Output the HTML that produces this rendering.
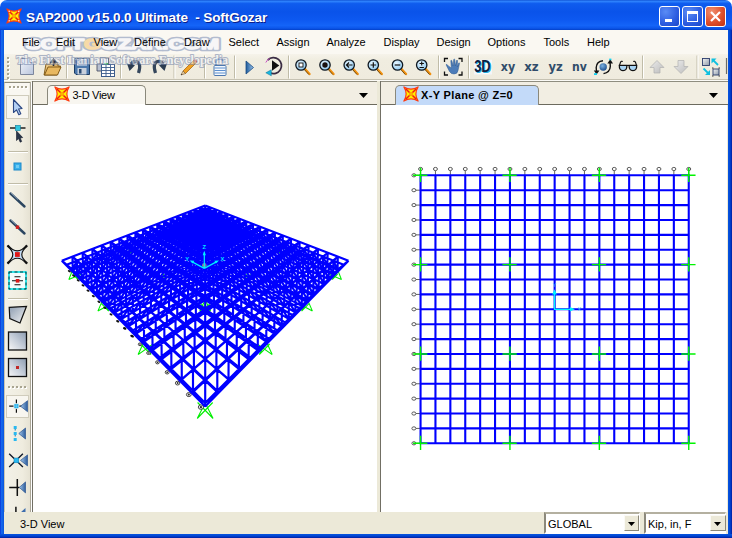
<!DOCTYPE html><html><head><meta charset="utf-8"><title>SAP2000 v15.0.0 Ultimate - SoftGozar</title><style>
html,body{margin:0;padding:0;}
body{width:732px;height:538px;overflow:hidden;background:#fff;position:relative;font-family:"Liberation Sans","DejaVu Sans",sans-serif;font-size:11px;color:#000;}
.abs{position:absolute;}
#title{left:0;top:0;width:732px;height:30px;background:linear-gradient(to bottom,#1458d8 0%,#2c80fc 5%,#0f5cee 12%,#0a53ea 40%,#0d58f0 65%,#1464f8 85%,#0c56ea 94%,#0340c8 100%);border-radius:7px 7px 0 0;}
#ttext{left:26px;top:9.5px;color:#fff;font-weight:bold;font-size:13.6px;letter-spacing:-0.12px;white-space:pre;text-shadow:1px 1px 0 #0a1e8a;}
#menubar{left:4px;top:30px;width:724px;height:24px;background:#faf8f2;}
.mi{position:absolute;top:36px;font-size:11px;color:#000;white-space:pre;}
#tbar{left:4px;top:54px;width:724px;height:25px;background:linear-gradient(to bottom,#f6f3ea 0%,#f0ede0 25%,#efebde 100%);}
#tbline{left:4px;top:79px;width:724px;height:1px;background:#c6c2b2;border-bottom:1px solid #fbfaf6;}
#work{left:4px;top:81px;width:724px;height:432px;background:#ece9d8;}
#ltb{left:4px;top:82px;width:26px;height:430px;background:linear-gradient(to right,#f3f1e8,#efecdf 70%,#e6e2d3);border-top:1px solid #8c8a7c;border-left:1px solid #c8c4b4;box-sizing:border-box}
.tabstrip{position:absolute;top:81px;height:22px;background:#f2eee3;border-top:1px solid #8f8d80;border-bottom:1px solid #6c6a5e;}
.view{position:absolute;top:105px;height:407px;background:#fff;}
#status{left:4px;top:512px;width:724px;height:22px;background:#ece9d8;}
.tab{position:absolute;top:85px;height:19px;border:1px solid #8a887b;border-bottom:none;border-radius:5px 5px 0 0;}
.wm{position:absolute;white-space:pre;pointer-events:none;}
.combo{position:absolute;top:512px;height:18px;background:#fff;border-top:2px solid #b4b0a0;border-left:2px solid #8c897c;border-right:1px solid #fff;border-bottom:2px solid #fff;font-size:11px;}
</style></head><body>
<div id="title" class="abs"></div>
<div id="ttext" class="abs">SAP2000 v15.0.0 Ultimate  - SoftGozar</div>
<svg class="abs" style="left:6px;top:8px" width="16" height="16" viewBox="0 0 18 18"><path d="M1 1Q9 6 17 1Q12 9 17 17Q9 12 1 17Q6 9 1 1Z" fill="#ffee00" stroke="#ff3a10" stroke-width="1.3" stroke-linejoin="round"/><path d="M3 3L15 15M15 3L3 15" stroke="#f01818" stroke-width="1.7"/><rect x="7" y="7" width="4" height="4" fill="#ffb000"/><circle cx="3.6" cy="3.6" r="0.8" fill="#fff"/><circle cx="14.4" cy="3.6" r="0.8" fill="#fff"/><circle cx="3.6" cy="14.4" r="0.8" fill="#fff"/><circle cx="14.4" cy="14.4" r="0.8" fill="#fff"/></svg>
<div class="abs" style="left:659px;top:6px;width:19px;height:19px;border:1px solid #fff;border-radius:3px;background:radial-gradient(circle at 30% 25%,#5a8cf5,#2c5ce0 60%,#1c46c8)"></div>
<div class="abs" style="left:665px;top:19px;width:7px;height:3px;background:#fff"></div>
<div class="abs" style="left:682px;top:6px;width:19px;height:19px;border:1px solid #fff;border-radius:3px;background:radial-gradient(circle at 30% 25%,#5a8cf5,#2c5ce0 60%,#1c46c8)"></div>
<div class="abs" style="left:687px;top:11px;width:9px;height:7px;border:1px solid #fff;border-top:3px solid #fff"></div>
<div class="abs" style="left:705px;top:6px;width:19px;height:19px;border:1px solid #fff;border-radius:3px;background:radial-gradient(circle at 30% 25%,#f09070,#e0502c 55%,#c03010)"></div>
<svg class="abs" style="left:705px;top:6px" width="21" height="21" viewBox="0 0 21 21"><path d="M6 6L15 15M15 6L6 15" stroke="#fff" stroke-width="2.2"/></svg>

<div id="menubar" class="abs"></div>
<div id="tbar" class="abs"></div><div id="tbline" class="abs"></div>
<div id="work" class="abs"></div><div id="ltb" class="abs"></div>
<svg class="abs" style="left:0;top:0" width="732" height="110" viewBox="0 0 732 110" font-family="Liberation Sans,sans-serif"><defs>
<linearGradient id="gpage" x1="0" y1="0" x2="1" y2="1"><stop offset="0" stop-color="#f4f6fb"/><stop offset="1" stop-color="#b8c4dc"/></linearGradient>
<linearGradient id="gfold" x1="0" y1="0" x2="1" y2="1"><stop offset="0" stop-color="#f8dca0"/><stop offset="1" stop-color="#c08830"/></linearGradient>
<linearGradient id="gtri" x1="0" y1="0" x2="1" y2="0"><stop offset="0" stop-color="#1c5a9c"/><stop offset="1" stop-color="#9cc4ea"/></linearGradient>
<linearGradient id="garr" x1="0" y1="0" x2="1" y2="1"><stop offset="0" stop-color="#ececec"/><stop offset="1" stop-color="#bcbcbc"/></linearGradient>
<radialGradient id="glens" cx="0.4" cy="0.35" r="0.7"><stop offset="0" stop-color="#e8f6ff"/><stop offset="1" stop-color="#8cc8f0"/></radialGradient>
<radialGradient id="gsph" cx="0.4" cy="0.35" r="0.7"><stop offset="0" stop-color="#7ab0e0"/><stop offset="1" stop-color="#1c4c8c"/></radialGradient>
<linearGradient id="gsq" x1="0" y1="0" x2="1" y2="1"><stop offset="0" stop-color="#f4f4f4"/><stop offset="1" stop-color="#8c98a8"/></linearGradient>
</defs><rect x="8" y="58" width="2" height="2" fill="#fff"/><rect x="7" y="57" width="2" height="2" fill="#a8a490"/><rect x="8" y="62" width="2" height="2" fill="#fff"/><rect x="7" y="61" width="2" height="2" fill="#a8a490"/><rect x="8" y="66" width="2" height="2" fill="#fff"/><rect x="7" y="65" width="2" height="2" fill="#a8a490"/><rect x="8" y="70" width="2" height="2" fill="#fff"/><rect x="7" y="69" width="2" height="2" fill="#a8a490"/><rect x="8" y="74" width="2" height="2" fill="#fff"/><rect x="7" y="73" width="2" height="2" fill="#a8a490"/><rect x="8" y="78" width="2" height="2" fill="#fff"/><rect x="7" y="77" width="2" height="2" fill="#a8a490"/><path d="M66.5 55.500V78.500" stroke="#c0bca8" stroke-width="1"/><path d="M67.5 55.500V78.500" stroke="#fff" stroke-width="1"/><path d="M120.5 55.500V78.500" stroke="#c0bca8" stroke-width="1"/><path d="M121.5 55.500V78.500" stroke="#fff" stroke-width="1"/><path d="M174.0 55.500V78.500" stroke="#c0bca8" stroke-width="1"/><path d="M175.0 55.500V78.500" stroke="#fff" stroke-width="1"/><path d="M204.5 55.500V78.500" stroke="#c0bca8" stroke-width="1"/><path d="M205.5 55.500V78.500" stroke="#fff" stroke-width="1"/><path d="M234.5 55.500V78.500" stroke="#c0bca8" stroke-width="1"/><path d="M235.5 55.500V78.500" stroke="#fff" stroke-width="1"/><path d="M288.5 55.500V78.500" stroke="#c0bca8" stroke-width="1"/><path d="M289.5 55.500V78.500" stroke="#fff" stroke-width="1"/><path d="M438.5 55.500V78.500" stroke="#c0bca8" stroke-width="1"/><path d="M439.5 55.500V78.500" stroke="#fff" stroke-width="1"/><path d="M468.5 55.500V78.500" stroke="#c0bca8" stroke-width="1"/><path d="M469.5 55.500V78.500" stroke="#fff" stroke-width="1"/><path d="M642.5 55.500V78.500" stroke="#c0bca8" stroke-width="1"/><path d="M643.5 55.500V78.500" stroke="#fff" stroke-width="1"/><path d="M697.0 55.500V78.500" stroke="#c0bca8" stroke-width="1"/><path d="M698.0 55.500V78.500" stroke="#fff" stroke-width="1"/><path d="M20.5 58.5H29.5L33.5 62.5V74.5H20.5Z" fill="url(#gpage)" stroke="#7c869c" stroke-width="1"/><path d="M29.5 58.5V62.5H33.5" fill="#fff" stroke="#7c869c" stroke-width="1"/><path d="M44 75L46 64H50L51 62.5H57L58 64V66H60.5L57 75Z" fill="url(#gfold)" stroke="#7a5410" stroke-width="0.9"/><path d="M44.5 75L48 67H61L57.5 75Z" fill="#e8b860" stroke="#7a5410" stroke-width="0.9"/><path d="M53.5 66V61M50.8 62.5L53.5 59L56.2 62.5Z" stroke="#26282c" stroke-width="1.6" fill="#26282c"/><path d="M74.5 58.5H89.5V74.5H76L74.5 73Z" fill="#4c78ac" stroke="#1c3c64" stroke-width="1"/><rect x="77" y="59" width="10" height="6.5" fill="#e8eef6"/><path d="M78 61H86M78 63H86" stroke="#6c7c90" stroke-width="0.8"/><rect x="77.5" y="68" width="9" height="6.5" fill="#c8d0dc"/><rect x="79" y="69" width="2.5" height="4.5" fill="#2c4c74"/><rect x="100.5" y="58" width="8" height="10" fill="#f4f4f4" stroke="#5c6478" stroke-width="0.9"/><path d="M97 63.5H103V71H97Z" fill="#b8c0d0" stroke="#4c5468" stroke-width="0.9"/><rect x="101.5" y="64.500" width="13" height="12" fill="#fff" stroke="#3c5c8c" stroke-width="1"/><path d="M101.5 67.500H114.500M101.500 70.500H114.500M101.500 73.500H114.500M106 64.500V76.500M110.500 64.500V76.500" stroke="#3c5c8c" stroke-width="0.9"/><rect x="104" y="63" width="4" height="1.500" fill="#30c060"/><path d="M138.500 73Q142 62.500 135.500 61.300Q132 61 131 65" stroke="#34465c" stroke-width="3.200" fill="none"/><path d="M127 63.500L135 65.200L129.500 71Z" fill="#2c3c50"/><path d="M155.500 73Q152 62.500 158.500 61.300Q162 61 163 65" stroke="#34465c" stroke-width="3.200" fill="none"/><path d="M167 63.500L159 65.200L164.500 71Z" fill="#2c3c50"/><path d="M183 71L193.500 60.500L196 63L185.500 73.500Z" fill="#f0a020" stroke="#a05c08" stroke-width="0.7"/><path d="M183 71L185.500 73.500L181 75Z" fill="#e8d0a0" stroke="#705030" stroke-width="0.6"/><path d="M193.500 60.500L195 59L197.500 61.500L196 63Z" fill="#c84030"/><path d="M181 75l1.200 -0.400l-0.800 -0.800z" fill="#202020"/><path d="M216 66V62.500Q216 59 219.500 59Q223 59 223 62V63" stroke="#5c88c0" stroke-width="1.600" fill="none"/><rect x="214" y="65.500" width="12" height="10" rx="1" fill="#f4f8fc" stroke="#4c78b0" stroke-width="1"/><path d="M214.500 68H225.500M214.500 70.500H225.500M214.500 73H225.500" stroke="#5c90d0" stroke-width="1.200"/><path d="M246 61L253.500 67.500L246 74Z" fill="url(#gtri)" stroke="#1c4c84" stroke-width="0.8"/><path d="M267.800 60A8 8 0 1 1 270 72.800" stroke="#3a2c44" stroke-width="1.800" fill="none"/><path d="M265.800 62.500Q267 60 269.500 58.500" stroke="#c040c0" stroke-width="0.900" fill="none"/><path d="M272 60.200L279.300 65.500L272 70.800Z" fill="#101010"/><path d="M265.800 72.800L271.300 69.800V75.800Z" fill="#18b8e0" stroke="#0c6c90" stroke-width="0.500"/><path d="M305.0 69L309.5 74" stroke="#f09010" stroke-width="2.400" stroke-linecap="round"/><path d="M304.3 69.500L308.8 74.500" stroke="#40300c" stroke-width="0.700"/><circle cx="301.0" cy="65" r="5.200" fill="url(#glens)" stroke="#101820" stroke-width="1.300"/><rect x="299" y="63" width="4" height="4" fill="#fff" stroke="#101010" stroke-width="0.900"/><path d="M329.0 69L333.5 74" stroke="#f09010" stroke-width="2.400" stroke-linecap="round"/><path d="M328.3 69.500L332.8 74.500" stroke="#40300c" stroke-width="0.700"/><circle cx="325.0" cy="65" r="5.200" fill="url(#glens)" stroke="#101820" stroke-width="1.300"/><circle cx="325" cy="65" r="2.700" fill="#181010"/><path d="M353.2 69L357.7 74" stroke="#f09010" stroke-width="2.400" stroke-linecap="round"/><path d="M352.5 69.500L357.0 74.500" stroke="#40300c" stroke-width="0.700"/><circle cx="349.2" cy="65" r="5.200" fill="url(#glens)" stroke="#101820" stroke-width="1.300"/><path d="M346.500 65H352.500M349 62.500L346.500 65L349 67.500" stroke="#101010" stroke-width="1.200" fill="none"/><path d="M377.3 69L381.8 74" stroke="#f09010" stroke-width="2.400" stroke-linecap="round"/><path d="M376.6 69.500L381.1 74.500" stroke="#40300c" stroke-width="0.700"/><circle cx="373.3" cy="65" r="5.200" fill="url(#glens)" stroke="#101820" stroke-width="1.300"/><path d="M370.500 65H376.100M373.300 62.200V67.800" stroke="#101010" stroke-width="1.200"/><path d="M401.5 69L406.0 74" stroke="#f09010" stroke-width="2.400" stroke-linecap="round"/><path d="M400.8 69.500L405.3 74.500" stroke="#40300c" stroke-width="0.700"/><circle cx="397.5" cy="65" r="5.200" fill="url(#glens)" stroke="#101820" stroke-width="1.300"/><path d="M394.700 65H400.300" stroke="#101010" stroke-width="1.200"/><path d="M425.7 69L430.2 74" stroke="#f09010" stroke-width="2.400" stroke-linecap="round"/><path d="M425.0 69.500L429.5 74.500" stroke="#40300c" stroke-width="0.700"/><circle cx="421.7" cy="65" r="5.200" fill="url(#glens)" stroke="#101820" stroke-width="1.300"/><path d="M419.500 63.500H423.900M421.700 61.500V65.500M419.500 67.500H423.900" stroke="#101010" stroke-width="1.100"/><path d="M444.500 62V58.500H448M458.500 58.500H462V62M462 71.500V75H458.500M448 75H444.500V71.500" stroke="#101010" stroke-width="1.300" fill="none"/><path d="M449 66.500L447 64.500Q446 64 446.300 65.200L449.500 71.500Q451 74 454 74Q457.500 74 458 70.500L459.500 63.500Q459.500 62.500 458.700 63L457.300 67L457.500 60.500Q457 59.500 456.500 60.500L455.300 66L454.800 59.500Q454.200 58.500 453.700 59.500L453.200 66L451.800 60.500Q451.200 59.700 450.800 60.700L451.300 68Z" fill="#4c7cb8" stroke="#2c5890" stroke-width="0.500"/><rect x="474" y="59.700" width="18" height="14.800" fill="#f2f5fa" opacity="0.95"/><g font-family="Liberation Sans,sans-serif" font-size="16.500" font-weight="bold"><text x="475.200" y="73" fill="#ffffff" stroke="#ffffff" stroke-width="1.500" textLength="16.500" lengthAdjust="spacingAndGlyphs">3D</text><text x="475" y="72.800" fill="#28b0e0" textLength="16.500" lengthAdjust="spacingAndGlyphs">3D</text><text x="474.200" y="72.200" fill="#0c2040" textLength="16.500" lengthAdjust="spacingAndGlyphs">3D</text></g><text x="500.8" y="70.800" font-family="DejaVu Sans,sans-serif" font-size="13" font-weight="bold" fill="#304c6a" textLength="14.4" lengthAdjust="spacingAndGlyphs">xy</text><text x="524.3" y="70.800" font-family="DejaVu Sans,sans-serif" font-size="13" font-weight="bold" fill="#304c6a" textLength="14.4" lengthAdjust="spacingAndGlyphs">xz</text><text x="548.6" y="70.800" font-family="DejaVu Sans,sans-serif" font-size="13" font-weight="bold" fill="#304c6a" textLength="14.2" lengthAdjust="spacingAndGlyphs">yz</text><text x="572.0" y="70.800" font-family="DejaVu Sans,sans-serif" font-size="13" font-weight="bold" fill="#304c6a" textLength="14.8" lengthAdjust="spacingAndGlyphs">nv</text><circle cx="603.200" cy="67" r="3.700" fill="url(#gsph)"/><path d="M603 60.800Q596.500 61.500 596.200 67.500Q596.200 70 596.800 71.500" stroke="#101010" stroke-width="1.400" fill="none"/><path d="M603.500 73.600Q610 72.500 610.300 66.500Q610.300 64 610 62.800" stroke="#101010" stroke-width="1.400" fill="none"/><path d="M610.200 59.200L613 63.600H607.400Z" fill="#101010"/><path d="M596.600 74.600L593.800 70.400H599.400Z" fill="#101010"/><rect x="609.200" y="58.600" width="2.200" height="1.600" fill="#10d0f0"/><rect x="594" y="73.200" width="3" height="1.800" fill="#10d0f0"/><path d="M619.300 66L620.500 62.300Q621.200 60.800 622.800 61.600M636.700 66L635.500 62.300Q634.800 60.800 633.200 61.600" stroke="#101010" stroke-width="1.100" fill="none"/><path d="M619.300 65.300H626.800Q627.300 70.600 623 70.600Q619 70.600 619.300 65.300ZM629.200 65.300H636.700Q637 70.600 633 70.600Q628.700 70.600 629.200 65.300Z" fill="#a8d4f4" stroke="#101010" stroke-width="1.200"/><path d="M626.500 65.800Q628 64.800 629.500 65.800" stroke="#101010" stroke-width="1.200" fill="none"/><path d="M657 60.500L664 67.500H660V73H654V67.500H650Z" fill="url(#garr)" stroke="#b0b0b0" stroke-width="0.700"/><path d="M681 73.500L688 66.500H684V60.500H678V66.500H674Z" fill="url(#garr)" stroke="#b0b0b0" stroke-width="0.700"/><rect x="702.500" y="58.500" width="7" height="7" fill="url(#gsq)" stroke="#2c3c6c" stroke-width="0.900"/><rect x="713" y="69" width="6" height="6" fill="url(#gsq)" stroke="#2c3c6c" stroke-width="0.900"/><path d="M712 68H713.500M718.500 68H720M712 76H713.500M718.500 76H720" stroke="#101010" stroke-width="0.800"/><path d="M718 65L713 60" stroke="#10c0e0" stroke-width="1.800"/><path d="M711.500 58.500H716.500L711.500 63.500Z" fill="#10c0e0"/><path d="M703.500 68.500L708.500 73.500" stroke="#10c0e0" stroke-width="1.800"/><path d="M710 75H705L710 70Z" fill="#10c0e0"/><path d="M726.500 58V74" stroke="#6c6c64" stroke-width="1.200"/></svg>
<svg class="abs" style="left:0;top:81px" width="34" height="432" viewBox="0 81 34 432"><defs>
<linearGradient id="lsq" x1="0" y1="1" x2="1" y2="0"><stop offset="0" stop-color="#f8f8f8"/><stop offset="0.5" stop-color="#c4ccd8"/><stop offset="1" stop-color="#8c9cb0"/></linearGradient>
<linearGradient id="lsq2" x1="0" y1="0" x2="1" y2="1"><stop offset="0" stop-color="#8c9cb0"/><stop offset="1" stop-color="#f4f4f4"/></linearGradient>
<linearGradient id="ltri" x1="0" y1="0" x2="1" y2="0"><stop offset="0" stop-color="#a4c8ec"/><stop offset="1" stop-color="#2c5c9c"/></linearGradient>
</defs><rect x="5.500" y="83" width="24" height="12" fill="#f9f7f1"/><rect x="10" y="87" width="2" height="2" fill="#fff"/><rect x="9" y="86" width="2" height="2" fill="#a8a490"/><rect x="14" y="87" width="2" height="2" fill="#fff"/><rect x="13" y="86" width="2" height="2" fill="#a8a490"/><rect x="18" y="87" width="2" height="2" fill="#fff"/><rect x="17" y="86" width="2" height="2" fill="#a8a490"/><rect x="22" y="87" width="2" height="2" fill="#fff"/><rect x="21" y="86" width="2" height="2" fill="#a8a490"/><rect x="26" y="87" width="2" height="2" fill="#fff"/><rect x="25" y="86" width="2" height="2" fill="#a8a490"/><rect x="6.5" y="95.500" width="22" height="23" fill="#f8f6f0" stroke="#d0ccbc" stroke-width="1"/><path d="M13.500 99.500V112.500L16.500 109.800L18.800 114.800L20.800 113.800L18.600 109L22 108.500Z" fill="#b4d0f4" stroke="#2c4884" stroke-width="1.100" stroke-linejoin="round"/><path d="M10 128H25.500" stroke="#101010" stroke-width="1.400"/><rect x="15.300" y="125.300" width="5" height="5.300" fill="#30c8e0" stroke="#1c7c98" stroke-width="0.600"/><path d="M16.500 131V140.500L18.600 138.600L20.200 142.200L21.700 141.500L20.200 138L22.700 137.600Z" fill="#283448" stroke="#101828" stroke-width="0.600"/><path d="M8 151.5H28" stroke="#c0bca8" stroke-width="1"/><path d="M8 152.5H28" stroke="#fff" stroke-width="1"/><path d="M8 183.5H28" stroke="#c0bca8" stroke-width="1"/><path d="M8 184.5H28" stroke="#fff" stroke-width="1"/><path d="M8 298.5H28" stroke="#c0bca8" stroke-width="1"/><path d="M8 299.5H28" stroke="#fff" stroke-width="1"/><rect x="14" y="163" width="7" height="7" fill="#38b0ec" stroke="#1c88c8" stroke-width="1"/><rect x="16" y="165" width="3" height="3" fill="#70ccf4"/><path d="M10.500 193.500L24.500 206.500" stroke="#2c4660" stroke-width="2.400" stroke-linecap="round"/><path d="M10.800 192.800L18 199.500" stroke="#8ca4bc" stroke-width="0.900"/><path d="M10.500 220.500L24.500 233.500" stroke="#2c4660" stroke-width="2.400" stroke-linecap="round"/><path d="M10.800 219.800L16 224.600" stroke="#8ca4bc" stroke-width="0.900"/><rect x="15.800" y="225.500" width="3.400" height="3.400" fill="#d02020"/><path d="M8.300 245.300Q12.500 250.800 17.300 250.800Q22.100 250.800 26.300 245.300L27.200 246.200Q21.800 250.500 21.800 254.500Q21.800 258.500 27.200 262.800L26.300 263.700Q22.100 258.200 17.300 258.200Q12.500 258.200 8.300 263.700L7.400 262.800Q12.800 258.500 12.800 254.500Q12.800 250.500 7.400 246.200Z" fill="#c4dcf4" stroke="#101010" stroke-width="1.150" stroke-linejoin="round"/><rect x="15" y="252.100" width="4.800" height="4.800" fill="#e01818"/><rect x="9" y="272" width="17" height="17" fill="#f4fcfc" stroke="#00e0e8" stroke-width="1.600"/><rect x="9" y="272" width="17" height="17" fill="none" stroke="#101010" stroke-width="0.800" stroke-dasharray="3 2.500"/><path d="M12 280.800H23M14.500 276.800H20.500M14.500 284.800H20.500" stroke="#101010" stroke-width="1.100"/><rect x="15.800" y="279" width="3.600" height="3.600" fill="#e01818"/><path d="M9.200 307.300L26.500 306.300L20 323L9.800 318.600Z" fill="url(#lsq2)" stroke="#101010" stroke-width="1.200"/><rect x="8.500" y="332" width="18" height="18" fill="url(#lsq)" stroke="#101010" stroke-width="1.300"/><rect x="8.500" y="358.500" width="18" height="18" fill="url(#lsq)" stroke="#101010" stroke-width="1.300"/><rect x="16" y="366" width="3" height="3" fill="#c02828"/><rect x="9" y="387" width="2" height="2" fill="#fff"/><rect x="8" y="386" width="2" height="2" fill="#a8a490"/><rect x="13" y="387" width="2" height="2" fill="#fff"/><rect x="12" y="386" width="2" height="2" fill="#a8a490"/><rect x="17" y="387" width="2" height="2" fill="#fff"/><rect x="16" y="386" width="2" height="2" fill="#a8a490"/><rect x="21" y="387" width="2" height="2" fill="#fff"/><rect x="20" y="386" width="2" height="2" fill="#a8a490"/><rect x="25" y="387" width="2" height="2" fill="#fff"/><rect x="24" y="386" width="2" height="2" fill="#a8a490"/><rect x="6.500" y="395.500" width="22" height="22" fill="#f8f6f0" stroke="#d0ccbc" stroke-width="1"/><path d="M9.200 406.200H22.500M16.400 399.500V412.700" stroke="#101010" stroke-width="1.200"/><rect x="13.900" y="403.700" width="5" height="5" fill="#20b0ec" stroke="#f4f2ea" stroke-width="0.800"/><path d="M16.400 404V408.400M14.200 406.200H18.600" stroke="#7cd4f8" stroke-width="0.600"/><path d="M20.5 406.2L27.5 400.7V411.7Z" fill="url(#ltri)" stroke="#2c5490" stroke-width="0.700"/><path d="M15.200 426V440.500" stroke="#1878b0" stroke-width="1" stroke-dasharray="1.500 1.500"/><rect x="13.700" y="426" width="3" height="3" fill="#28b8f0"/><rect x="13.700" y="432" width="3" height="3" fill="#28b8f0"/><rect x="13.700" y="438" width="3" height="3" fill="#28b8f0"/><path d="M18.8 433.5L25.5 428.0V439.0Z" fill="url(#ltri)" stroke="#2c5490" stroke-width="0.700"/><path d="M9.200 453.700L22.900 467M22.900 453.700L9.200 467" stroke="#101828" stroke-width="1.400"/><rect x="14" y="458" width="4.800" height="4.800" fill="#28b8f0" stroke="#1080b8" stroke-width="0.500"/><path d="M20.5 460.4L27.5 454.9V465.9Z" fill="url(#ltri)" stroke="#2c5490" stroke-width="0.700"/><path d="M9.200 487.400H19.500M17.300 479V496" stroke="#101010" stroke-width="1.500"/><path d="M19.3 487.4L25.5 481.9V492.9Z" fill="url(#ltri)" stroke="#2c5490" stroke-width="0.700"/><path d="M15.900 506.700V513" stroke="#101010" stroke-width="1.500"/><path d="M20 513L25.500 508V513Z" fill="#3c6cac"/></svg>
<div class="abs" style="left:30px;top:82px;width:1px;height:430px;background:#aca899"></div><div class="abs" style="left:31px;top:82px;width:1px;height:430px;background:#fff"></div><div class="abs" style="left:32px;top:81px;width:1px;height:431px;background:#716f64"></div>
<div class="tabstrip" style="left:33px;width:344px"></div>
<div class="tabstrip" style="left:381px;width:347px"></div>
<div class="view" style="left:33px;width:344px"></div>
<div class="view" style="left:381px;width:346px"></div><div class="abs" style="left:380px;top:81px;width:1px;height:431px;background:#716f64"></div>
<div class="tab" style="left:47px;width:97px;background:#f8f6f0"></div>
<div class="abs" style="left:48px;top:104px;width:97px;height:1px;background:#fff"></div>
<svg class="abs" style="left:54px;top:86px" width="16" height="16" viewBox="0 0 18 18"><path d="M1 1Q9 6 17 1Q12 9 17 17Q9 12 1 17Q6 9 1 1Z" fill="#ffee00" stroke="#ff3a10" stroke-width="1.3" stroke-linejoin="round"/><path d="M3 3L15 15M15 3L3 15" stroke="#f01818" stroke-width="1.7"/><rect x="7" y="7" width="4" height="4" fill="#ffb000"/></svg>
<div class="abs" style="left:72.5px;top:89px;font-size:11px;letter-spacing:-0.3px;white-space:pre">3-D View</div>
<div class="tab" style="left:395px;width:142px;background:#c3daf9"></div>
<svg class="abs" style="left:402.5px;top:86px" width="16" height="16" viewBox="0 0 18 18"><path d="M1 1Q9 6 17 1Q12 9 17 17Q9 12 1 17Q6 9 1 1Z" fill="#ffee00" stroke="#ff3a10" stroke-width="1.3" stroke-linejoin="round"/><path d="M3 3L15 15M15 3L3 15" stroke="#f01818" stroke-width="1.7"/><rect x="7" y="7" width="4" height="4" fill="#ffb000"/></svg>
<div class="abs" style="left:421px;top:89px;font-size:11px;font-weight:bold;letter-spacing:0.35px;white-space:pre">X-Y Plane @ Z=0</div>
<svg class="abs" style="left:359px;top:93px" width="9" height="5"><path d="M0 0H9L4.5 5Z" fill="#000"/></svg>
<svg class="abs" style="left:709px;top:93px" width="9" height="5"><path d="M0 0H9L4.5 5Z" fill="#000"/></svg>

<svg class="abs" style="left:0;top:0" width="732" height="538" viewBox="0 0 732 538"><path d="M72.7 269.8L68.8 279.6M72.7 269.8L78.1 279.6M68.8 279.6L81.7 274.0M78.1 279.6L72.7 274.0M127.6 247.0L123.9 255.8M127.6 247.0L132.1 255.8M123.9 255.8L133.9 251.4M132.1 255.8L125.9 251.4M170.6 229.2L167.1 237.1M170.6 229.2L174.4 237.1M167.1 237.1L175.1 233.6M174.4 237.1L167.9 233.6M205.2 214.8L201.9 222.0M205.2 214.8L208.4 222.0M201.9 222.0L208.4 219.2M208.4 222.0L201.9 219.2M102.7 299.9L97.9 311.1M102.7 299.9L108.7 311.1M97.9 311.1L111.9 303.6M108.7 311.1L101.4 303.6M161.0 269.8L156.6 279.6M161.0 269.8L165.9 279.6M156.6 279.6L167.0 274.0M165.9 279.6L158.0 274.0M205.2 247.0L201.1 255.8M205.2 247.0L209.2 255.8M201.1 255.8L209.1 251.4M209.2 255.8L201.2 251.4M239.7 229.2L235.9 237.1M239.7 229.2L243.2 237.1M235.9 237.1L242.4 233.6M243.2 237.1L235.2 233.6M144.1 341.5L138.1 354.6M144.1 341.5L151.0 354.6M138.1 354.6L153.1 344.0M151.0 354.6L140.7 344.0M205.2 299.9L199.7 311.1M205.2 299.9L210.6 311.1M199.7 311.1L210.4 303.6M210.6 311.1L199.9 303.6M249.3 269.8L244.4 279.6M249.3 269.8L253.7 279.6M244.4 279.6L252.3 274.0M253.7 279.6L243.3 274.0M282.7 247.0L278.2 255.8M282.7 247.0L286.4 255.8M278.2 255.8L284.4 251.4M286.4 255.8L276.4 251.4M205.2 402.9L197.2 418.5M205.2 402.9L213.1 418.5M197.2 418.5L212.7 402.5M213.1 418.5L197.6 402.5M266.2 341.5L259.3 354.6M266.2 341.5L272.2 354.6M259.3 354.6L269.6 344.0M272.2 354.6L257.2 344.0M307.6 299.9L301.6 311.1M307.6 299.9L312.4 311.1M301.6 311.1L308.9 303.6M312.4 311.1L298.4 303.6M337.6 269.8L332.2 279.6M337.6 269.8L341.5 279.6M332.2 279.6L337.6 274.0M341.5 279.6L328.6 274.0" stroke="#00ee00" stroke-width="1.1" fill="none"/><ellipse cx="69.3" cy="271.2" rx="1.6" ry="1.0" fill="#101010" transform="rotate(25 69.3 271.2)"/><ellipse cx="73.6" cy="275.7" rx="1.6" ry="1.0" fill="#101010" transform="rotate(25 73.6 275.7)"/><ellipse cx="78.2" cy="280.4" rx="1.6" ry="1.0" fill="#101010" transform="rotate(25 78.2 280.4)"/><ellipse cx="83.0" cy="285.4" rx="1.6" ry="1.0" fill="#101010" transform="rotate(25 83.0 285.4)"/><ellipse cx="88.0" cy="290.6" rx="1.6" ry="1.0" fill="#101010" transform="rotate(25 88.0 290.6)"/><ellipse cx="93.3" cy="296.1" rx="1.6" ry="1.0" fill="#101010" transform="rotate(25 93.3 296.1)"/><ellipse cx="98.9" cy="301.8" rx="1.6" ry="1.0" fill="#101010" transform="rotate(25 98.9 301.8)"/><ellipse cx="104.8" cy="307.9" rx="1.6" ry="1.0" fill="#101010" transform="rotate(25 104.8 307.9)"/><ellipse cx="111.0" cy="314.4" rx="1.6" ry="1.0" fill="#101010" transform="rotate(25 111.0 314.4)"/><ellipse cx="117.7" cy="321.2" rx="1.7" ry="1.1" fill="#101010" transform="rotate(25 117.7 321.2)"/><ellipse cx="124.7" cy="328.4" rx="1.8" ry="1.2" fill="#101010" transform="rotate(25 124.7 328.4)"/><ellipse cx="132.1" cy="336.1" rx="2.0" ry="1.2" fill="#101010" transform="rotate(25 132.1 336.1)"/><ellipse cx="140.0" cy="344.3" rx="1.7" ry="1.4" fill="#fff" stroke="#303030" stroke-width="0.9"/><circle cx="140.0" cy="344.3" r="0.7" fill="#303030"/><ellipse cx="148.5" cy="353.0" rx="1.8" ry="1.5" fill="#fff" stroke="#303030" stroke-width="0.9"/><circle cx="148.5" cy="353.0" r="0.8" fill="#303030"/><ellipse cx="157.5" cy="362.3" rx="1.9" ry="1.6" fill="#fff" stroke="#303030" stroke-width="0.9"/><circle cx="157.5" cy="362.3" r="0.9" fill="#303030"/><ellipse cx="167.2" cy="372.3" rx="2.0" ry="1.7" fill="#fff" stroke="#303030" stroke-width="0.9"/><circle cx="167.2" cy="372.3" r="0.9" fill="#303030"/><ellipse cx="177.6" cy="383.1" rx="2.2" ry="1.9" fill="#fff" stroke="#303030" stroke-width="0.9"/><circle cx="177.6" cy="383.1" r="1.0" fill="#303030"/><ellipse cx="188.8" cy="394.6" rx="2.4" ry="2.0" fill="#fff" stroke="#303030" stroke-width="0.9"/><circle cx="188.8" cy="394.6" r="1.1" fill="#303030"/><ellipse cx="200.9" cy="407.1" rx="2.6" ry="2.2" fill="#fff" stroke="#303030" stroke-width="0.9"/><circle cx="200.9" cy="407.1" r="1.2" fill="#303030"/><path d="M72.7 269.8L205.2 214.8M72.7 269.8L205.2 402.9M77.1 274.2L210.4 217.0M82.9 265.6L217.3 390.7M81.7 278.9L215.9 219.3M92.6 261.5L228.5 379.5M86.6 283.7L221.5 221.6M101.9 257.7L238.9 369.0M91.7 288.8L227.4 224.1M110.9 254.0L248.6 359.2M97.0 294.2L233.4 226.6M119.4 250.4L257.7 350.1M102.7 299.9L239.7 229.2M127.6 247.0L266.2 341.5M108.6 305.9L246.2 231.9M135.5 243.7L274.2 333.5M114.9 312.2L253.0 234.7M143.0 240.6L281.7 326.0M121.6 318.9L260.0 237.6M150.3 237.6L288.7 318.9M128.6 326.0L267.3 240.6M157.3 234.7L295.4 312.2M136.1 333.5L274.8 243.7M164.1 231.9L301.7 305.9M144.1 341.5L282.7 247.0M170.6 229.2L307.6 299.9M152.6 350.1L290.9 250.4M176.9 226.6L313.3 294.2M161.7 359.2L299.4 254.0M182.9 224.1L318.6 288.8M171.4 369.0L308.4 257.7M188.8 221.6L323.7 283.7M181.8 379.5L317.7 261.5M194.4 219.3L328.6 278.9M193.0 390.7L327.4 265.6M199.9 217.0L333.2 274.2M205.2 402.9L337.6 269.8M205.2 214.8L337.6 269.8M61.8 260.7L205.2 205.5M61.8 260.7L205.2 406.4M66.0 265.0L210.4 207.5M72.5 256.6L218.3 393.0M70.5 269.6L215.9 209.6M82.7 252.7L230.4 380.7M75.2 274.3L221.6 211.8M92.4 248.9L241.6 369.4M80.1 279.4L227.4 214.0M101.8 245.3L252.0 358.8M85.3 284.6L233.5 216.4M110.7 241.9L261.6 349.0M90.8 290.2L239.8 218.8M119.3 238.6L270.6 339.9M96.6 296.1L246.3 221.3M127.5 235.4L278.9 331.4M102.8 302.3L253.0 223.9M135.4 232.4L286.8 323.5M109.3 309.0L260.1 226.6M143.0 229.4L294.1 316.0M116.2 316.0L267.3 229.4M150.2 226.6L301.0 309.0M123.5 323.5L274.9 232.4M157.3 223.9L307.5 302.3M131.4 331.4L282.8 235.4M164.0 221.3L313.7 296.1M139.7 339.9L291.0 238.6M170.5 218.8L319.5 290.2M148.7 349.0L299.6 241.9M176.8 216.4L325.0 284.6M158.3 358.8L308.5 245.3M182.9 214.0L330.2 279.4M168.7 369.4L317.9 248.9M188.7 211.8L335.1 274.3M179.9 380.7L327.6 252.7M194.4 209.6L339.8 269.6M192.0 393.0L337.8 256.6M199.9 207.5L344.3 265.0M205.2 406.4L348.5 260.7M205.2 205.5L348.5 260.7M61.8 260.7L72.7 269.8M72.5 256.6L72.7 269.8M72.5 256.6L82.9 265.6M82.7 252.7L82.9 265.6M82.7 252.7L92.6 261.5M92.4 248.9L92.6 261.5M92.4 248.9L101.9 257.7M101.8 245.3L101.9 257.7M101.8 245.3L110.9 254.0M110.7 241.9L110.9 254.0M110.7 241.9L119.4 250.4M119.3 238.6L119.4 250.4M119.3 238.6L127.6 247.0M127.5 235.4L127.6 247.0M127.5 235.4L135.5 243.7M135.4 232.4L135.5 243.7M135.4 232.4L143.0 240.6M143.0 229.4L143.0 240.6M143.0 229.4L150.3 237.6M150.2 226.6L150.3 237.6M150.2 226.6L157.3 234.7M157.3 223.9L157.3 234.7M157.3 223.9L164.1 231.9M164.0 221.3L164.1 231.9M164.0 221.3L170.6 229.2M170.5 218.8L170.6 229.2M170.5 218.8L176.9 226.6M176.8 216.4L176.9 226.6M176.8 216.4L182.9 224.1M182.9 214.0L182.9 224.1M182.9 214.0L188.8 221.6M188.7 211.8L188.8 221.6M188.7 211.8L194.4 219.3M194.4 209.6L194.4 219.3M194.4 209.6L199.9 217.0M199.9 207.5L199.9 217.0M199.9 207.5L205.2 214.8M205.2 205.5L205.2 214.8M66.0 265.0L72.7 269.8M66.0 265.0L77.1 274.2M76.9 260.7L72.7 269.8M76.9 260.7L82.9 265.6M76.9 260.7L77.1 274.2M76.9 260.7L87.4 269.8M87.2 256.6L82.9 265.6M87.2 256.6L92.6 261.5M87.2 256.6L87.4 269.8M87.2 256.6L97.3 265.6M97.1 252.7L92.6 261.5M97.1 252.7L101.9 257.7M97.1 252.7L97.3 265.6M97.1 252.7L106.7 261.5M106.5 248.9L101.9 257.7M106.5 248.9L110.9 254.0M106.5 248.9L106.7 261.5M106.5 248.9L115.7 257.7M115.5 245.3L110.9 254.0M115.5 245.3L119.4 250.4M115.5 245.3L115.7 257.7M115.5 245.3L124.3 254.0M124.2 241.9L119.4 250.4M124.2 241.9L127.6 247.0M124.2 241.9L124.3 254.0M124.2 241.9L132.6 250.4M132.5 238.6L127.6 247.0M132.5 238.6L135.5 243.7M132.5 238.6L132.6 250.4M132.5 238.6L140.5 247.0M140.4 235.4L135.5 243.7M140.4 235.4L143.0 240.6M140.4 235.4L140.5 247.0M140.4 235.4L148.1 243.7M148.1 232.4L143.0 240.6M148.1 232.4L150.3 237.6M148.1 232.4L148.1 243.7M148.1 232.4L155.5 240.6M155.4 229.4L150.3 237.6M155.4 229.4L157.3 234.7M155.4 229.4L155.5 240.6M155.4 229.4L162.5 237.6M162.4 226.6L157.3 234.7M162.4 226.6L164.1 231.9M162.4 226.6L162.5 237.6M162.4 226.6L169.3 234.7M169.2 223.9L164.1 231.9M169.2 223.9L170.6 229.2M169.2 223.9L169.3 234.7M169.2 223.9L175.8 231.9M175.8 221.3L170.6 229.2M175.8 221.3L176.9 226.6M175.8 221.3L175.8 231.9M175.8 221.3L182.1 229.2M182.1 218.8L176.9 226.6M182.1 218.8L182.9 224.1M182.1 218.8L182.1 229.2M182.1 218.8L188.2 226.6M188.2 216.4L182.9 224.1M188.2 216.4L188.8 221.6M188.2 216.4L188.2 226.6M188.2 216.4L194.0 224.1M194.0 214.0L188.8 221.6M194.0 214.0L194.4 219.3M194.0 214.0L194.0 224.1M194.0 214.0L199.7 221.6M199.7 211.8L194.4 219.3M199.7 211.8L199.9 217.0M199.7 211.8L199.7 221.6M199.7 211.8L205.2 219.3M205.2 209.6L199.9 217.0M205.2 209.6L205.2 214.8M205.2 209.6L205.2 219.3M205.2 209.6L210.4 217.0M210.4 207.5L205.2 214.8M210.4 207.5L210.4 217.0M70.5 269.6L77.1 274.2M70.5 269.6L81.7 278.9M81.5 265.0L77.1 274.2M81.5 265.0L87.4 269.8M81.5 265.0L81.7 278.9M81.5 265.0L92.2 274.2M92.0 260.7L87.4 269.8M92.0 260.7L97.3 265.6M92.0 260.7L92.2 274.2M92.0 260.7L102.1 269.8M102.0 256.6L97.3 265.6M102.0 256.6L106.7 261.5M102.0 256.6L102.1 269.8M102.0 256.6L111.7 265.6M111.5 252.7L106.7 261.5M111.5 252.7L115.7 257.7M111.5 252.7L111.7 265.6M111.5 252.7L120.8 261.5M120.6 248.9L115.7 257.7M120.6 248.9L124.3 254.0M120.6 248.9L120.8 261.5M120.6 248.9L129.5 257.7M129.3 245.3L124.3 254.0M129.3 245.3L132.6 250.4M129.3 245.3L129.5 257.7M129.3 245.3L137.8 254.0M137.7 241.9L132.6 250.4M137.7 241.9L140.5 247.0M137.7 241.9L137.8 254.0M137.7 241.9L145.8 250.4M145.7 238.6L140.5 247.0M145.7 238.6L148.1 243.7M145.7 238.6L145.8 250.4M145.7 238.6L153.5 247.0M153.4 235.4L148.1 243.7M153.4 235.4L155.5 240.6M153.4 235.4L153.5 247.0M153.4 235.4L160.8 243.7M160.7 232.4L155.5 240.6M160.7 232.4L162.5 237.6M160.7 232.4L160.8 243.7M160.7 232.4L167.9 240.6M167.8 229.4L162.5 237.6M167.8 229.4L169.3 234.7M167.8 229.4L167.9 240.6M167.8 229.4L174.7 237.6M174.6 226.6L169.3 234.7M174.6 226.6L175.8 231.9M174.6 226.6L174.7 237.6M174.6 226.6L181.2 234.7M181.2 223.9L175.8 231.9M181.2 223.9L182.1 229.2M181.2 223.9L181.2 234.7M181.2 223.9L187.5 231.9M187.5 221.3L182.1 229.2M187.5 221.3L188.2 226.6M187.5 221.3L187.5 231.9M187.5 221.3L193.6 229.2M193.6 218.8L188.2 226.6M193.6 218.8L194.0 224.1M193.6 218.8L193.6 229.2M193.6 218.8L199.5 226.6M199.5 216.4L194.0 224.1M199.5 216.4L199.7 221.6M199.5 216.4L199.5 226.6M199.5 216.4L205.2 224.1M205.2 214.0L199.7 221.6M205.2 214.0L205.2 219.3M205.2 214.0L205.2 224.1M205.2 214.0L210.6 221.6M210.6 211.8L205.2 219.3M210.6 211.8L210.4 217.0M210.6 211.8L210.6 221.6M210.6 211.8L215.9 219.3M215.9 209.6L210.4 217.0M215.9 209.6L215.9 219.3M75.2 274.3L81.7 278.9M75.2 274.3L86.6 283.7M86.3 269.6L81.7 278.9M86.3 269.6L92.2 274.2M86.3 269.6L86.6 283.7M86.3 269.6L97.2 278.9M97.0 265.0L92.2 274.2M97.0 265.0L102.1 269.8M97.0 265.0L97.2 278.9M97.0 265.0L107.2 274.2M107.1 260.7L102.1 269.8M107.1 260.7L111.7 265.6M107.1 260.7L107.2 274.2M107.1 260.7L116.9 269.8M116.7 256.6L111.7 265.6M116.7 256.6L120.8 261.5M116.7 256.6L116.9 269.8M116.7 256.6L126.0 265.6M125.9 252.7L120.8 261.5M125.9 252.7L129.5 257.7M125.9 252.7L126.0 265.6M125.9 252.7L134.8 261.5M134.7 248.9L129.5 257.7M134.7 248.9L137.8 254.0M134.7 248.9L134.8 261.5M134.7 248.9L143.2 257.7M143.1 245.3L137.8 254.0M143.1 245.3L145.8 250.4M143.1 245.3L143.2 257.7M143.1 245.3L151.3 254.0M151.2 241.9L145.8 250.4M151.2 241.9L153.5 247.0M151.2 241.9L151.3 254.0M151.2 241.9L159.0 250.4M158.9 238.6L153.5 247.0M158.9 238.6L160.8 243.7M158.9 238.6L159.0 250.4M158.9 238.6L166.4 247.0M166.3 235.4L160.8 243.7M166.3 235.4L167.9 240.6M166.3 235.4L166.4 247.0M166.3 235.4L173.5 243.7M173.4 232.4L167.9 240.6M173.4 232.4L174.7 237.6M173.4 232.4L173.5 243.7M173.4 232.4L180.3 240.6M180.3 229.4L174.7 237.6M180.3 229.4L181.2 234.7M180.3 229.4L180.3 240.6M180.3 229.4L186.9 237.6M186.8 226.6L181.2 234.7M186.8 226.6L187.5 231.9M186.8 226.6L186.9 237.6M186.8 226.6L193.2 234.7M193.2 223.9L187.5 231.9M193.2 223.9L193.6 229.2M193.2 223.9L193.2 234.7M193.2 223.9L199.3 231.9M199.3 221.3L193.6 229.2M199.3 221.3L199.5 226.6M199.3 221.3L199.3 231.9M199.3 221.3L205.2 229.2M205.2 218.8L199.5 226.6M205.2 218.8L205.2 224.1M205.2 218.8L205.2 229.2M205.2 218.8L210.8 226.6M210.8 216.4L205.2 224.1M210.8 216.4L210.6 221.6M210.8 216.4L210.8 226.6M210.8 216.4L216.3 224.1M216.3 214.0L210.6 221.6M216.3 214.0L215.9 219.3M216.3 214.0L216.3 224.1M216.3 214.0L221.5 221.6M221.6 211.8L215.9 219.3M221.6 211.8L221.5 221.6M80.1 279.4L86.6 283.7M80.1 279.4L91.7 288.8M91.4 274.3L86.6 283.7M91.4 274.3L97.2 278.9M91.4 274.3L91.7 288.8M91.4 274.3L102.4 283.7M102.2 269.6L97.2 278.9M102.2 269.6L107.2 274.2M102.2 269.6L102.4 283.7M102.2 269.6L112.6 278.9M112.4 265.0L107.2 274.2M112.4 265.0L116.9 269.8M112.4 265.0L112.6 278.9M112.4 265.0L122.3 274.2M122.2 260.7L116.9 269.8M122.2 260.7L126.0 265.6M122.2 260.7L122.3 274.2M122.2 260.7L131.6 269.8M131.4 256.6L126.0 265.6M131.4 256.6L134.8 261.5M131.4 256.6L131.6 269.8M131.4 256.6L140.4 265.6M140.3 252.7L134.8 261.5M140.3 252.7L143.2 257.7M140.3 252.7L140.4 265.6M140.3 252.7L148.9 261.5M148.8 248.9L143.2 257.7M148.8 248.9L151.3 254.0M148.8 248.9L148.9 261.5M148.8 248.9L157.0 257.7M156.9 245.3L151.3 254.0M156.9 245.3L159.0 250.4M156.9 245.3L157.0 257.7M156.9 245.3L164.7 254.0M164.7 241.9L159.0 250.4M164.7 241.9L166.4 247.0M164.7 241.9L164.7 254.0M164.7 241.9L172.2 250.4M172.1 238.6L166.4 247.0M172.1 238.6L173.5 243.7M172.1 238.6L172.2 250.4M172.1 238.6L179.3 247.0M179.3 235.4L173.5 243.7M179.3 235.4L180.3 240.6M179.3 235.4L179.3 247.0M179.3 235.4L186.1 243.7M186.1 232.4L180.3 240.6M186.1 232.4L186.9 237.6M186.1 232.4L186.1 243.7M186.1 232.4L192.7 240.6M192.7 229.4L186.9 237.6M192.7 229.4L193.2 234.7M192.7 229.4L192.7 240.6M192.7 229.4L199.1 237.6M199.0 226.6L193.2 234.7M199.0 226.6L199.3 231.9M199.0 226.6L199.1 237.6M199.0 226.6L205.2 234.7M205.2 223.9L199.3 231.9M205.2 223.9L205.2 229.2M205.2 223.9L205.2 234.7M205.2 223.9L211.0 231.9M211.0 221.3L205.2 229.2M211.0 221.3L210.8 226.6M211.0 221.3L211.0 231.9M211.0 221.3L216.7 229.2M216.7 218.8L210.8 226.6M216.7 218.8L216.3 224.1M216.7 218.8L216.7 229.2M216.7 218.8L222.1 226.6M222.1 216.4L216.3 224.1M222.1 216.4L221.5 221.6M222.1 216.4L222.1 226.6M222.1 216.4L227.4 224.1M227.4 214.0L221.5 221.6M227.4 214.0L227.4 224.1M85.3 284.6L91.7 288.8M85.3 284.6L97.0 294.2M96.8 279.4L91.7 288.8M96.8 279.4L102.4 283.7M96.8 279.4L97.0 294.2M96.8 279.4L107.9 288.8M107.7 274.3L102.4 283.7M107.7 274.3L112.6 278.9M107.7 274.3L107.9 288.8M107.7 274.3L118.2 283.7M118.0 269.6L112.6 278.9M118.0 269.6L122.3 274.2M118.0 269.6L118.2 283.7M118.0 269.6L128.0 278.9M127.9 265.0L122.3 274.2M127.9 265.0L131.6 269.8M127.9 265.0L128.0 278.9M127.9 265.0L137.4 274.2M137.2 260.7L131.6 269.8M137.2 260.7L140.4 265.6M137.2 260.7L137.4 274.2M137.2 260.7L146.3 269.8M146.2 256.6L140.4 265.6M146.2 256.6L148.9 261.5M146.2 256.6L146.3 269.8M146.2 256.6L154.8 265.6M154.7 252.7L148.9 261.5M154.7 252.7L157.0 257.7M154.7 252.7L154.8 265.6M154.7 252.7L163.0 261.5M162.9 248.9L157.0 257.7M162.9 248.9L164.7 254.0M162.9 248.9L163.0 261.5M162.9 248.9L170.7 257.7M170.7 245.3L164.7 254.0M170.7 245.3L172.2 250.4M170.7 245.3L170.7 257.7M170.7 245.3L178.2 254.0M178.2 241.9L172.2 250.4M178.2 241.9L179.3 247.0M178.2 241.9L178.2 254.0M178.2 241.9L185.4 250.4M185.3 238.6L179.3 247.0M185.3 238.6L186.1 243.7M185.3 238.6L185.4 250.4M185.3 238.6L192.2 247.0M192.2 235.4L186.1 243.7M192.2 235.4L192.7 240.6M192.2 235.4L192.2 247.0M192.2 235.4L198.8 243.7M198.8 232.4L192.7 240.6M198.8 232.4L199.1 237.6M198.8 232.4L198.8 243.7M198.8 232.4L205.2 240.6M205.2 229.4L199.1 237.6M205.2 229.4L205.2 234.7M205.2 229.4L205.2 240.6M205.2 229.4L211.2 237.6M211.3 226.6L205.2 234.7M211.3 226.6L211.0 231.9M211.3 226.6L211.2 237.6M211.3 226.6L217.1 234.7M217.1 223.9L211.0 231.9M217.1 223.9L216.7 229.2M217.1 223.9L217.1 234.7M217.1 223.9L222.8 231.9M222.8 221.3L216.7 229.2M222.8 221.3L222.1 226.6M222.8 221.3L222.8 231.9M222.8 221.3L228.2 229.2M228.2 218.8L222.1 226.6M228.2 218.8L227.4 224.1M228.2 218.8L228.2 229.2M228.2 218.8L233.4 226.6M233.5 216.4L227.4 224.1M233.5 216.4L233.4 226.6M90.8 290.2L97.0 294.2M90.8 290.2L102.7 299.9M102.4 284.6L97.0 294.2M102.4 284.6L107.9 288.8M102.4 284.6L102.7 299.9M102.4 284.6L113.7 294.2M113.5 279.4L107.9 288.8M113.5 279.4L118.2 283.7M113.5 279.4L113.7 294.2M113.5 279.4L124.1 288.8M123.9 274.3L118.2 283.7M123.9 274.3L128.0 278.9M123.9 274.3L124.1 288.8M123.9 274.3L134.0 283.7M133.9 269.6L128.0 278.9M133.9 269.6L137.4 274.2M133.9 269.6L134.0 283.7M133.9 269.6L143.4 278.9M143.3 265.0L137.4 274.2M143.3 265.0L146.3 269.8M143.3 265.0L143.4 278.9M143.3 265.0L152.4 274.2M152.3 260.7L146.3 269.8M152.3 260.7L154.8 265.6M152.3 260.7L152.4 274.2M152.3 260.7L161.0 269.8M160.9 256.6L154.8 265.6M160.9 256.6L163.0 261.5M160.9 256.6L161.0 269.8M160.9 256.6L169.2 265.6M169.1 252.7L163.0 261.5M169.1 252.7L170.7 257.7M169.1 252.7L169.2 265.6M169.1 252.7L177.0 261.5M177.0 248.9L170.7 257.7M177.0 248.9L178.2 254.0M177.0 248.9L177.0 261.5M177.0 248.9L184.5 257.7M184.5 245.3L178.2 254.0M184.5 245.3L185.4 250.4M184.5 245.3L184.5 257.7M184.5 245.3L191.7 254.0M191.7 241.9L185.4 250.4M191.7 241.9L192.2 247.0M191.7 241.9L191.7 254.0M191.7 241.9L198.6 250.4M198.5 238.6L192.2 247.0M198.5 238.6L198.8 243.7M198.5 238.6L198.6 250.4M198.5 238.6L205.2 247.0M205.2 235.4L198.8 243.7M205.2 235.4L205.2 240.6M205.2 235.4L205.2 247.0M205.2 235.4L211.5 243.7M211.5 232.4L205.2 240.6M211.5 232.4L211.2 237.6M211.5 232.4L211.5 243.7M211.5 232.4L217.6 240.6M217.6 229.4L211.2 237.6M217.6 229.4L217.1 234.7M217.6 229.4L217.6 240.6M217.6 229.4L223.4 237.6M223.5 226.6L217.1 234.7M223.5 226.6L222.8 231.9M223.5 226.6L223.4 237.6M223.5 226.6L229.1 234.7M229.1 223.9L222.8 231.9M229.1 223.9L228.2 229.2M229.1 223.9L229.1 234.7M229.1 223.9L234.5 231.9M234.5 221.3L228.2 229.2M234.5 221.3L233.4 226.6M234.5 221.3L234.5 231.9M234.5 221.3L239.7 229.2M239.8 218.8L233.4 226.6M239.8 218.8L239.7 229.2M96.6 296.1L102.7 299.9M96.6 296.1L108.6 305.9M108.4 290.2L102.7 299.9M108.4 290.2L113.7 294.2M108.4 290.2L108.6 305.9M108.4 290.2L119.7 299.9M119.6 284.6L113.7 294.2M119.6 284.6L124.1 288.8M119.6 284.6L119.7 299.9M119.6 284.6L130.3 294.2M130.1 279.4L124.1 288.8M130.1 279.4L134.0 283.7M130.1 279.4L130.3 294.2M130.1 279.4L140.3 288.8M140.2 274.3L134.0 283.7M140.2 274.3L143.4 278.9M140.2 274.3L140.3 288.8M140.2 274.3L149.8 283.7M149.7 269.6L143.4 278.9M149.7 269.6L152.4 274.2M149.7 269.6L149.8 283.7M149.7 269.6L158.9 278.9M158.8 265.0L152.4 274.2M158.8 265.0L161.0 269.8M158.8 265.0L158.9 278.9M158.8 265.0L167.5 274.2M167.4 260.7L161.0 269.8M167.4 260.7L169.2 265.6M167.4 260.7L167.5 274.2M167.4 260.7L175.7 269.8M175.7 256.6L169.2 265.6M175.7 256.6L177.0 261.5M175.7 256.6L175.7 269.8M175.7 256.6L183.6 265.6M183.5 252.7L177.0 261.5M183.5 252.7L184.5 257.7M183.5 252.7L183.6 265.6M183.5 252.7L191.1 261.5M191.1 248.9L184.5 257.7M191.1 248.9L191.7 254.0M191.1 248.9L191.1 261.5M191.1 248.9L198.3 257.7M198.3 245.3L191.7 254.0M198.3 245.3L198.6 250.4M198.3 245.3L198.3 257.7M198.3 245.3L205.2 254.0M205.2 241.9L198.6 250.4M205.2 241.9L205.2 247.0M205.2 241.9L205.2 254.0M205.2 241.9L211.7 250.4M211.8 238.6L205.2 247.0M211.8 238.6L211.5 243.7M211.8 238.6L211.7 250.4M211.8 238.6L218.1 247.0M218.1 235.4L211.5 243.7M218.1 235.4L217.6 240.6M218.1 235.4L218.1 247.0M218.1 235.4L224.2 243.7M224.2 232.4L217.6 240.6M224.2 232.4L223.4 237.6M224.2 232.4L224.2 243.7M224.2 232.4L230.0 240.6M230.0 229.4L223.4 237.6M230.0 229.4L229.1 234.7M230.0 229.4L230.0 240.6M230.0 229.4L235.6 237.6M235.7 226.6L229.1 234.7M235.7 226.6L234.5 231.9M235.7 226.6L235.6 237.6M235.7 226.6L241.0 234.7M241.1 223.9L234.5 231.9M241.1 223.9L239.7 229.2M241.1 223.9L241.0 234.7M241.1 223.9L246.2 231.9M246.3 221.3L239.7 229.2M246.3 221.3L246.2 231.9M102.8 302.3L108.6 305.9M102.8 302.3L114.9 312.2M114.7 296.1L108.6 305.9M114.7 296.1L119.7 299.9M114.7 296.1L114.9 312.2M114.7 296.1L126.2 305.9M126.0 290.2L119.7 299.9M126.0 290.2L130.3 294.2M126.0 290.2L126.2 305.9M126.0 290.2L136.8 299.9M136.7 284.6L130.3 294.2M136.7 284.6L140.3 288.8M136.7 284.6L136.8 299.9M136.7 284.6L146.9 294.2M146.8 279.4L140.3 288.8M146.8 279.4L149.8 283.7M146.8 279.4L146.9 294.2M146.8 279.4L156.5 288.8M156.4 274.3L149.8 283.7M156.4 274.3L158.9 278.9M156.4 274.3L156.5 288.8M156.4 274.3L165.6 283.7M165.5 269.6L158.9 278.9M165.5 269.6L167.5 274.2M165.5 269.6L165.6 283.7M165.5 269.6L174.3 278.9M174.2 265.0L167.5 274.2M174.2 265.0L175.7 269.8M174.2 265.0L174.3 278.9M174.2 265.0L182.6 274.2M182.5 260.7L175.7 269.8M182.5 260.7L183.6 265.6M182.5 260.7L182.6 274.2M182.5 260.7L190.4 269.8M190.4 256.6L183.6 265.6M190.4 256.6L191.1 261.5M190.4 256.6L190.4 269.8M190.4 256.6L198.0 265.6M197.9 252.7L191.1 261.5M197.9 252.7L198.3 257.7M197.9 252.7L198.0 265.6M197.9 252.7L205.2 261.5M205.2 248.9L198.3 257.7M205.2 248.9L205.2 254.0M205.2 248.9L205.2 261.5M205.2 248.9L212.0 257.7M212.0 245.3L205.2 254.0M212.0 245.3L211.7 250.4M212.0 245.3L212.0 257.7M212.0 245.3L218.6 254.0M218.6 241.9L211.7 250.4M218.6 241.9L218.1 247.0M218.6 241.9L218.6 254.0M218.6 241.9L224.9 250.4M225.0 238.6L218.1 247.0M225.0 238.6L224.2 243.7M225.0 238.6L224.9 250.4M225.0 238.6L231.0 247.0M231.0 235.4L224.2 243.7M231.0 235.4L230.0 240.6M231.0 235.4L231.0 247.0M231.0 235.4L236.8 243.7M236.9 232.4L230.0 240.6M236.9 232.4L235.6 237.6M236.9 232.4L236.8 243.7M236.9 232.4L242.4 240.6M242.5 229.4L235.6 237.6M242.5 229.4L241.0 234.7M242.5 229.4L242.4 240.6M242.5 229.4L247.8 237.6M247.9 226.6L241.0 234.7M247.9 226.6L246.2 231.9M247.9 226.6L247.8 237.6M247.9 226.6L253.0 234.7M253.0 223.9L246.2 231.9M253.0 223.9L253.0 234.7M109.3 309.0L114.9 312.2M109.3 309.0L121.6 318.9M121.4 302.3L114.9 312.2M121.4 302.3L126.2 305.9M121.4 302.3L121.6 318.9M121.4 302.3L133.0 312.2M132.8 296.1L126.2 305.9M132.8 296.1L136.8 299.9M132.8 296.1L133.0 312.2M132.8 296.1L143.7 305.9M143.6 290.2L136.8 299.9M143.6 290.2L146.9 294.2M143.6 290.2L143.7 305.9M143.6 290.2L153.9 299.9M153.8 284.6L146.9 294.2M153.8 284.6L156.5 288.8M153.8 284.6L153.9 299.9M153.8 284.6L163.6 294.2M163.5 279.4L156.5 288.8M163.5 279.4L165.6 283.7M163.5 279.4L163.6 294.2M163.5 279.4L172.7 288.8M172.7 274.3L165.6 283.7M172.7 274.3L174.3 278.9M172.7 274.3L172.7 288.8M172.7 274.3L181.4 283.7M181.4 269.6L174.3 278.9M181.4 269.6L182.6 274.2M181.4 269.6L181.4 283.7M181.4 269.6L189.7 278.9M189.7 265.0L182.6 274.2M189.7 265.0L190.4 269.8M189.7 265.0L189.7 278.9M189.7 265.0L197.6 274.2M197.6 260.7L190.4 269.8M197.6 260.7L198.0 265.6M197.6 260.7L197.6 274.2M197.6 260.7L205.2 269.8M205.2 256.6L198.0 265.6M205.2 256.6L205.2 261.5M205.2 256.6L205.2 269.8M205.2 256.6L212.3 265.6M212.4 252.7L205.2 261.5M212.4 252.7L212.0 257.7M212.4 252.7L212.3 265.6M212.4 252.7L219.2 261.5M219.2 248.9L212.0 257.7M219.2 248.9L218.6 254.0M219.2 248.9L219.2 261.5M219.2 248.9L225.8 257.7M225.8 245.3L218.6 254.0M225.8 245.3L224.9 250.4M225.8 245.3L225.8 257.7M225.8 245.3L232.1 254.0M232.1 241.9L224.9 250.4M232.1 241.9L231.0 247.0M232.1 241.9L232.1 254.0M232.1 241.9L238.1 250.4M238.2 238.6L231.0 247.0M238.2 238.6L236.8 243.7M238.2 238.6L238.1 250.4M238.2 238.6L243.9 247.0M244.0 235.4L236.8 243.7M244.0 235.4L242.4 240.6M244.0 235.4L243.9 247.0M244.0 235.4L249.5 243.7M249.6 232.4L242.4 240.6M249.6 232.4L247.8 237.6M249.6 232.4L249.5 243.7M249.6 232.4L254.8 240.6M254.9 229.4L247.8 237.6M254.9 229.4L253.0 234.7M254.9 229.4L254.8 240.6M254.9 229.4L260.0 237.6M260.1 226.6L253.0 234.7M260.1 226.6L260.0 237.6M116.2 316.0L121.6 318.9M116.2 316.0L128.6 326.0M128.4 309.0L121.6 318.9M128.4 309.0L133.0 312.2M128.4 309.0L128.6 326.0M128.4 309.0L140.1 318.9M140.0 302.3L133.0 312.2M140.0 302.3L143.7 305.9M140.0 302.3L140.1 318.9M140.0 302.3L151.0 312.2M150.9 296.1L143.7 305.9M150.9 296.1L153.9 299.9M150.9 296.1L151.0 312.2M150.9 296.1L161.3 305.9M161.2 290.2L153.9 299.9M161.2 290.2L163.6 294.2M161.2 290.2L161.3 305.9M161.2 290.2L171.0 299.9M170.9 284.6L163.6 294.2M170.9 284.6L172.7 288.8M170.9 284.6L171.0 299.9M170.9 284.6L180.2 294.2M180.1 279.4L172.7 288.8M180.1 279.4L181.4 283.7M180.1 279.4L180.2 294.2M180.1 279.4L188.9 288.8M188.9 274.3L181.4 283.7M188.9 274.3L189.7 278.9M188.9 274.3L188.9 288.8M188.9 274.3L197.2 283.7M197.2 269.6L189.7 278.9M197.2 269.6L197.6 274.2M197.2 269.6L197.2 283.7M197.2 269.6L205.2 278.9M205.2 265.0L197.6 274.2M205.2 265.0L205.2 269.8M205.2 265.0L205.2 278.9M205.2 265.0L212.7 274.2M212.7 260.7L205.2 269.8M212.7 260.7L212.3 265.6M212.7 260.7L212.7 274.2M212.7 260.7L219.9 269.8M219.9 256.6L212.3 265.6M219.9 256.6L219.2 261.5M219.9 256.6L219.9 269.8M219.9 256.6L226.7 265.6M226.8 252.7L219.2 261.5M226.8 252.7L225.8 257.7M226.8 252.7L226.7 265.6M226.8 252.7L233.3 261.5M233.3 248.9L225.8 257.7M233.3 248.9L232.1 254.0M233.3 248.9L233.3 261.5M233.3 248.9L239.6 257.7M239.6 245.3L232.1 254.0M239.6 245.3L238.1 250.4M239.6 245.3L239.6 257.7M239.6 245.3L245.6 254.0M245.6 241.9L238.1 250.4M245.6 241.9L243.9 247.0M245.6 241.9L245.6 254.0M245.6 241.9L251.3 250.4M251.4 238.6L243.9 247.0M251.4 238.6L249.5 243.7M251.4 238.6L251.3 250.4M251.4 238.6L256.8 247.0M256.9 235.4L249.5 243.7M256.9 235.4L254.8 240.6M256.9 235.4L256.8 247.0M256.9 235.4L262.2 243.7M262.2 232.4L254.8 240.6M262.2 232.4L260.0 237.6M262.2 232.4L262.2 243.7M262.2 232.4L267.3 240.6M267.3 229.4L260.0 237.6M267.3 229.4L267.3 240.6M123.5 323.5L128.6 326.0M123.5 323.5L136.1 333.5M135.9 316.0L128.6 326.0M135.9 316.0L140.1 318.9M135.9 316.0L136.1 333.5M135.9 316.0L147.8 326.0M147.6 309.0L140.1 318.9M147.6 309.0L151.0 312.2M147.6 309.0L147.8 326.0M147.6 309.0L158.7 318.9M158.6 302.3L151.0 312.2M158.6 302.3L161.3 305.9M158.6 302.3L158.7 318.9M158.6 302.3L169.1 312.2M169.0 296.1L161.3 305.9M169.0 296.1L171.0 299.9M169.0 296.1L169.1 312.2M169.0 296.1L178.8 305.9M178.8 290.2L171.0 299.9M178.8 290.2L180.2 294.2M178.8 290.2L178.8 305.9M178.8 290.2L188.1 299.9M188.0 284.6L180.2 294.2M188.0 284.6L188.9 288.8M188.0 284.6L188.1 299.9M188.0 284.6L196.8 294.2M196.8 279.4L188.9 288.8M196.8 279.4L197.2 283.7M196.8 279.4L196.8 294.2M196.8 279.4L205.2 288.8M205.2 274.3L197.2 283.7M205.2 274.3L205.2 278.9M205.2 274.3L205.2 288.8M205.2 274.3L213.1 283.7M213.1 269.6L205.2 278.9M213.1 269.6L212.7 274.2M213.1 269.6L213.1 283.7M213.1 269.6L220.6 278.9M220.6 265.0L212.7 274.2M220.6 265.0L219.9 269.8M220.6 265.0L220.6 278.9M220.6 265.0L227.7 274.2M227.8 260.7L219.9 269.8M227.8 260.7L226.7 265.6M227.8 260.7L227.7 274.2M227.8 260.7L234.6 269.8M234.6 256.6L226.7 265.6M234.6 256.6L233.3 261.5M234.6 256.6L234.6 269.8M234.6 256.6L241.1 265.6M241.2 252.7L233.3 261.5M241.2 252.7L239.6 257.7M241.2 252.7L241.1 265.6M241.2 252.7L247.3 261.5M247.4 248.9L239.6 257.7M247.4 248.9L245.6 254.0M247.4 248.9L247.3 261.5M247.4 248.9L253.3 257.7M253.4 245.3L245.6 254.0M253.4 245.3L251.3 250.4M253.4 245.3L253.3 257.7M253.4 245.3L259.0 254.0M259.1 241.9L251.3 250.4M259.1 241.9L256.8 247.0M259.1 241.9L259.0 254.0M259.1 241.9L264.5 250.4M264.6 238.6L256.8 247.0M264.6 238.6L262.2 243.7M264.6 238.6L264.5 250.4M264.6 238.6L269.8 247.0M269.9 235.4L262.2 243.7M269.9 235.4L267.3 240.6M269.9 235.4L269.8 247.0M269.9 235.4L274.8 243.7M274.9 232.4L267.3 240.6M274.9 232.4L274.8 243.7M131.4 331.4L136.1 333.5M131.4 331.4L144.1 341.5M143.9 323.5L136.1 333.5M143.9 323.5L147.8 326.0M143.9 323.5L144.1 341.5M143.9 323.5L155.8 333.5M155.7 316.0L147.8 326.0M155.7 316.0L158.7 318.9M155.7 316.0L155.8 333.5M155.7 316.0L166.9 326.0M166.8 309.0L158.7 318.9M166.8 309.0L169.1 312.2M166.8 309.0L166.9 326.0M166.8 309.0L177.3 318.9M177.2 302.3L169.1 312.2M177.2 302.3L178.8 305.9M177.2 302.3L177.3 318.9M177.2 302.3L187.1 312.2M187.1 296.1L178.8 305.9M187.1 296.1L188.1 299.9M187.1 296.1L187.1 312.2M187.1 296.1L196.4 305.9M196.4 290.2L188.1 299.9M196.4 290.2L196.8 294.2M196.4 290.2L196.4 305.9M196.4 290.2L205.2 299.9M205.2 284.6L196.8 294.2M205.2 284.6L205.2 288.8M205.2 284.6L205.2 299.9M205.2 284.6L213.5 294.2M213.5 279.4L205.2 288.8M213.5 279.4L213.1 283.7M213.5 279.4L213.5 294.2M213.5 279.4L221.4 288.8M221.4 274.3L213.1 283.7M221.4 274.3L220.6 278.9M221.4 274.3L221.4 288.8M221.4 274.3L228.9 283.7M228.9 269.6L220.6 278.9M228.9 269.6L227.7 274.2M228.9 269.6L228.9 283.7M228.9 269.6L236.0 278.9M236.1 265.0L227.7 274.2M236.1 265.0L234.6 269.8M236.1 265.0L236.0 278.9M236.1 265.0L242.8 274.2M242.9 260.7L234.6 269.8M242.9 260.7L241.1 265.6M242.9 260.7L242.8 274.2M242.9 260.7L249.3 269.8M249.4 256.6L241.1 265.6M249.4 256.6L247.3 261.5M249.4 256.6L249.3 269.8M249.4 256.6L255.5 265.6M255.6 252.7L247.3 261.5M255.6 252.7L253.3 257.7M255.6 252.7L255.5 265.6M255.6 252.7L261.4 261.5M261.5 248.9L253.3 257.7M261.5 248.9L259.0 254.0M261.5 248.9L261.4 261.5M261.5 248.9L267.1 257.7M267.2 245.3L259.0 254.0M267.2 245.3L264.5 250.4M267.2 245.3L267.1 257.7M267.2 245.3L272.5 254.0M272.6 241.9L264.5 250.4M272.6 241.9L269.8 247.0M272.6 241.9L272.5 254.0M272.6 241.9L277.7 250.4M277.8 238.6L269.8 247.0M277.8 238.6L274.8 243.7M277.8 238.6L277.7 250.4M277.8 238.6L282.7 247.0M282.8 235.4L274.8 243.7M282.8 235.4L282.7 247.0M139.7 339.9L144.1 341.5M139.7 339.9L152.6 350.1M152.4 331.4L144.1 341.5M152.4 331.4L155.8 333.5M152.4 331.4L152.6 350.1M152.4 331.4L164.4 341.5M164.3 323.5L155.8 333.5M164.3 323.5L166.9 326.0M164.3 323.5L164.4 341.5M164.3 323.5L175.6 333.5M175.5 316.0L166.9 326.0M175.5 316.0L177.3 318.9M175.5 316.0L175.6 333.5M175.5 316.0L186.0 326.0M186.0 309.0L177.3 318.9M186.0 309.0L187.1 312.2M186.0 309.0L186.0 326.0M186.0 309.0L195.9 318.9M195.8 302.3L187.1 312.2M195.8 302.3L196.4 305.9M195.8 302.3L195.9 318.9M195.8 302.3L205.2 312.2M205.2 296.1L196.4 305.9M205.2 296.1L205.2 299.9M205.2 296.1L205.2 312.2M205.2 296.1L213.9 305.9M213.9 290.2L205.2 299.9M213.9 290.2L213.5 294.2M213.9 290.2L213.9 305.9M213.9 290.2L222.2 299.9M222.3 284.6L213.5 294.2M222.3 284.6L221.4 288.8M222.3 284.6L222.2 299.9M222.3 284.6L230.1 294.2M230.2 279.4L221.4 288.8M230.2 279.4L228.9 283.7M230.2 279.4L230.1 294.2M230.2 279.4L237.6 288.8M237.6 274.3L228.9 283.7M237.6 274.3L236.0 278.9M237.6 274.3L237.6 288.8M237.6 274.3L244.7 283.7M244.8 269.6L236.0 278.9M244.8 269.6L242.8 274.2M244.8 269.6L244.7 283.7M244.8 269.6L251.4 278.9M251.5 265.0L242.8 274.2M251.5 265.0L249.3 269.8M251.5 265.0L251.4 278.9M251.5 265.0L257.9 274.2M258.0 260.7L249.3 269.8M258.0 260.7L255.5 265.6M258.0 260.7L257.9 274.2M258.0 260.7L264.0 269.8M264.1 256.6L255.5 265.6M264.1 256.6L261.4 261.5M264.1 256.6L264.0 269.8M264.1 256.6L269.9 265.6M270.0 252.7L261.4 261.5M270.0 252.7L267.1 257.7M270.0 252.7L269.9 265.6M270.0 252.7L275.5 261.5M275.6 248.9L267.1 257.7M275.6 248.9L272.5 254.0M275.6 248.9L275.5 261.5M275.6 248.9L280.8 257.7M281.0 245.3L272.5 254.0M281.0 245.3L277.7 250.4M281.0 245.3L280.8 257.7M281.0 245.3L286.0 254.0M286.1 241.9L277.7 250.4M286.1 241.9L282.7 247.0M286.1 241.9L286.0 254.0M286.1 241.9L290.9 250.4M291.0 238.6L282.7 247.0M291.0 238.6L290.9 250.4M148.7 349.0L152.6 350.1M148.7 349.0L161.7 359.2M161.5 339.9L152.6 350.1M161.5 339.9L164.4 341.5M161.5 339.9L161.7 359.2M161.5 339.9L173.6 350.1M173.5 331.4L164.4 341.5M173.5 331.4L175.6 333.5M173.5 331.4L173.6 350.1M173.5 331.4L184.8 341.5M184.7 323.5L175.6 333.5M184.7 323.5L186.0 326.0M184.7 323.5L184.8 341.5M184.7 323.5L195.3 333.5M195.3 316.0L186.0 326.0M195.3 316.0L195.9 318.9M195.3 316.0L195.3 333.5M195.3 316.0L205.2 326.0M205.2 309.0L195.9 318.9M205.2 309.0L205.2 312.2M205.2 309.0L205.2 326.0M205.2 309.0L214.4 318.9M214.5 302.3L205.2 312.2M214.5 302.3L213.9 305.9M214.5 302.3L214.4 318.9M214.5 302.3L223.2 312.2M223.2 296.1L213.9 305.9M223.2 296.1L222.2 299.9M223.2 296.1L223.2 312.2M223.2 296.1L231.5 305.9M231.5 290.2L222.2 299.9M231.5 290.2L230.1 294.2M231.5 290.2L231.5 305.9M231.5 290.2L239.3 299.9M239.4 284.6L230.1 294.2M239.4 284.6L237.6 288.8M239.4 284.6L239.3 299.9M239.4 284.6L246.7 294.2M246.8 279.4L237.6 288.8M246.8 279.4L244.7 283.7M246.8 279.4L246.7 294.2M246.8 279.4L253.8 288.8M253.9 274.3L244.7 283.7M253.9 274.3L251.4 278.9M253.9 274.3L253.8 288.8M253.9 274.3L260.5 283.7M260.6 269.6L251.4 278.9M260.6 269.6L257.9 274.2M260.6 269.6L260.5 283.7M260.6 269.6L266.9 278.9M267.0 265.0L257.9 274.2M267.0 265.0L264.0 269.8M267.0 265.0L266.9 278.9M267.0 265.0L272.9 274.2M273.1 260.7L264.0 269.8M273.1 260.7L269.9 265.6M273.1 260.7L272.9 274.2M273.1 260.7L278.7 269.8M278.9 256.6L269.9 265.6M278.9 256.6L275.5 261.5M278.9 256.6L278.7 269.8M278.9 256.6L284.3 265.6M284.4 252.7L275.5 261.5M284.4 252.7L280.8 257.7M284.4 252.7L284.3 265.6M284.4 252.7L289.5 261.5M289.7 248.9L280.8 257.7M289.7 248.9L286.0 254.0M289.7 248.9L289.5 261.5M289.7 248.9L294.6 257.7M294.8 245.3L286.0 254.0M294.8 245.3L290.9 250.4M294.8 245.3L294.6 257.7M294.8 245.3L299.4 254.0M299.6 241.9L290.9 250.4M299.6 241.9L299.4 254.0M158.3 358.8L161.7 359.2M158.3 358.8L171.4 369.0M171.3 349.0L161.7 359.2M171.3 349.0L173.6 350.1M171.3 349.0L171.4 369.0M171.3 349.0L183.4 359.2M183.3 339.9L173.6 350.1M183.3 339.9L184.8 341.5M183.3 339.9L183.4 359.2M183.3 339.9L194.6 350.1M194.6 331.4L184.8 341.5M194.6 331.4L195.3 333.5M194.6 331.4L194.6 350.1M194.6 331.4L205.2 341.5M205.2 323.5L195.3 333.5M205.2 323.5L205.2 326.0M205.2 323.5L205.2 341.5M205.2 323.5L215.0 333.5M215.0 316.0L205.2 326.0M215.0 316.0L214.4 318.9M215.0 316.0L215.0 333.5M215.0 316.0L224.3 326.0M224.3 309.0L214.4 318.9M224.3 309.0L223.2 312.2M224.3 309.0L224.3 326.0M224.3 309.0L233.0 318.9M233.1 302.3L223.2 312.2M233.1 302.3L231.5 305.9M233.1 302.3L233.0 318.9M233.1 302.3L241.2 312.2M241.3 296.1L231.5 305.9M241.3 296.1L239.3 299.9M241.3 296.1L241.2 312.2M241.3 296.1L249.0 305.9M249.1 290.2L239.3 299.9M249.1 290.2L246.7 294.2M249.1 290.2L249.0 305.9M249.1 290.2L256.4 299.9M256.5 284.6L246.7 294.2M256.5 284.6L253.8 288.8M256.5 284.6L256.4 299.9M256.5 284.6L263.4 294.2M263.5 279.4L253.8 288.8M263.5 279.4L260.5 283.7M263.5 279.4L263.4 294.2M263.5 279.4L270.0 288.8M270.1 274.3L260.5 283.7M270.1 274.3L266.9 278.9M270.1 274.3L270.0 288.8M270.1 274.3L276.3 283.7M276.4 269.6L266.9 278.9M276.4 269.6L272.9 274.2M276.4 269.6L276.3 283.7M276.4 269.6L282.3 278.9M282.4 265.0L272.9 274.2M282.4 265.0L278.7 269.8M282.4 265.0L282.3 278.9M282.4 265.0L288.0 274.2M288.1 260.7L278.7 269.8M288.1 260.7L284.3 265.6M288.1 260.7L288.0 274.2M288.1 260.7L293.4 269.8M293.6 256.6L284.3 265.6M293.6 256.6L289.5 261.5M293.6 256.6L293.4 269.8M293.6 256.6L298.6 265.6M298.8 252.7L289.5 261.5M298.8 252.7L294.6 257.7M298.8 252.7L298.6 265.6M298.8 252.7L303.6 261.5M303.8 248.9L294.6 257.7M303.8 248.9L299.4 254.0M303.8 248.9L303.6 261.5M303.8 248.9L308.4 257.7M308.5 245.3L299.4 254.0M308.5 245.3L308.4 257.7M168.7 369.4L171.4 369.0M168.7 369.4L181.8 379.5M181.7 358.8L171.4 369.0M181.7 358.8L183.4 359.2M181.7 358.8L181.8 379.5M181.7 358.8L193.9 369.0M193.9 349.0L183.4 359.2M193.9 349.0L194.6 350.1M193.9 349.0L193.9 369.0M193.9 349.0L205.2 359.2M205.2 339.9L194.6 350.1M205.2 339.9L205.2 341.5M205.2 339.9L205.2 359.2M205.2 339.9L215.7 350.1M215.7 331.4L205.2 341.5M215.7 331.4L215.0 333.5M215.7 331.4L215.7 350.1M215.7 331.4L225.5 341.5M225.6 323.5L215.0 333.5M225.6 323.5L224.3 326.0M225.6 323.5L225.5 341.5M225.6 323.5L234.7 333.5M234.8 316.0L224.3 326.0M234.8 316.0L233.0 318.9M234.8 316.0L234.7 333.5M234.8 316.0L243.4 326.0M243.5 309.0L233.0 318.9M243.5 309.0L241.2 312.2M243.5 309.0L243.4 326.0M243.5 309.0L251.6 318.9M251.7 302.3L241.2 312.2M251.7 302.3L249.0 305.9M251.7 302.3L251.6 318.9M251.7 302.3L259.3 312.2M259.4 296.1L249.0 305.9M259.4 296.1L256.4 299.9M259.4 296.1L259.3 312.2M259.4 296.1L266.6 305.9M266.7 290.2L256.4 299.9M266.7 290.2L263.4 294.2M266.7 290.2L266.6 305.9M266.7 290.2L273.5 299.9M273.6 284.6L263.4 294.2M273.6 284.6L270.0 288.8M273.6 284.6L273.5 299.9M273.6 284.6L280.0 294.2M280.2 279.4L270.0 288.8M280.2 279.4L276.3 283.7M280.2 279.4L280.0 294.2M280.2 279.4L286.2 288.8M286.4 274.3L276.3 283.7M286.4 274.3L282.3 278.9M286.4 274.3L286.2 288.8M286.4 274.3L292.1 283.7M292.3 269.6L282.3 278.9M292.3 269.6L288.0 274.2M292.3 269.6L292.1 283.7M292.3 269.6L297.7 278.9M297.9 265.0L288.0 274.2M297.9 265.0L293.4 269.8M297.9 265.0L297.7 278.9M297.9 265.0L303.1 274.2M303.2 260.7L293.4 269.8M303.2 260.7L298.6 265.6M303.2 260.7L303.1 274.2M303.2 260.7L308.2 269.8M308.3 256.6L298.6 265.6M308.3 256.6L303.6 261.5M308.3 256.6L308.2 269.8M308.3 256.6L313.0 265.6M313.2 252.7L303.6 261.5M313.2 252.7L308.4 257.7M313.2 252.7L313.0 265.6M313.2 252.7L317.7 261.5M317.9 248.9L308.4 257.7M317.9 248.9L317.7 261.5M179.9 380.7L181.8 379.5M179.9 380.7L193.0 390.7M193.0 369.4L181.8 379.5M193.0 369.4L193.9 369.0M193.0 369.4L193.0 390.7M193.0 369.4L205.2 379.5M205.2 358.8L193.9 369.0M205.2 358.8L205.2 359.2M205.2 358.8L205.2 379.5M205.2 358.8L216.4 369.0M216.4 349.0L205.2 359.2M216.4 349.0L215.7 350.1M216.4 349.0L216.4 369.0M216.4 349.0L226.9 359.2M227.0 339.9L215.7 350.1M227.0 339.9L225.5 341.5M227.0 339.9L226.9 359.2M227.0 339.9L236.7 350.1M236.8 331.4L225.5 341.5M236.8 331.4L234.7 333.5M236.8 331.4L236.7 350.1M236.8 331.4L245.9 341.5M246.0 323.5L234.7 333.5M246.0 323.5L243.4 326.0M246.0 323.5L245.9 341.5M246.0 323.5L254.5 333.5M254.6 316.0L243.4 326.0M254.6 316.0L251.6 318.9M254.6 316.0L254.5 333.5M254.6 316.0L262.5 326.0M262.7 309.0L251.6 318.9M262.7 309.0L259.3 312.2M262.7 309.0L262.5 326.0M262.7 309.0L270.2 318.9M270.3 302.3L259.3 312.2M270.3 302.3L266.6 305.9M270.3 302.3L270.2 318.9M270.3 302.3L277.3 312.2M277.5 296.1L266.6 305.9M277.5 296.1L273.5 299.9M277.5 296.1L277.3 312.2M277.5 296.1L284.1 305.9M284.3 290.2L273.5 299.9M284.3 290.2L280.0 294.2M284.3 290.2L284.1 305.9M284.3 290.2L290.6 299.9M290.7 284.6L280.0 294.2M290.7 284.6L286.2 288.8M290.7 284.6L290.6 299.9M290.7 284.6L296.6 294.2M296.8 279.4L286.2 288.8M296.8 279.4L292.1 283.7M296.8 279.4L296.6 294.2M296.8 279.4L302.4 288.8M302.6 274.3L292.1 283.7M302.6 274.3L297.7 278.9M302.6 274.3L302.4 288.8M302.6 274.3L307.9 283.7M308.1 269.6L297.7 278.9M308.1 269.6L303.1 274.2M308.1 269.6L307.9 283.7M308.1 269.6L313.1 278.9M313.3 265.0L303.1 274.2M313.3 265.0L308.2 269.8M313.3 265.0L313.1 278.9M313.3 265.0L318.1 274.2M318.3 260.7L308.2 269.8M318.3 260.7L313.0 265.6M318.3 260.7L318.1 274.2M318.3 260.7L322.9 269.8M323.1 256.6L313.0 265.6M323.1 256.6L317.7 261.5M323.1 256.6L322.9 269.8M323.1 256.6L327.4 265.6M327.6 252.7L317.7 261.5M327.6 252.7L327.4 265.6M192.0 393.0L193.0 390.7M192.0 393.0L205.2 402.9M205.2 380.7L193.0 390.7M205.2 380.7L205.2 379.5M205.2 380.7L205.2 402.9M205.2 380.7L217.3 390.7M217.3 369.4L205.2 379.5M217.3 369.4L216.4 369.0M217.3 369.4L217.3 390.7M217.3 369.4L228.5 379.5M228.6 358.8L216.4 369.0M228.6 358.8L226.9 359.2M228.6 358.8L228.5 379.5M228.6 358.8L238.9 369.0M239.0 349.0L226.9 359.2M239.0 349.0L236.7 350.1M239.0 349.0L238.9 369.0M239.0 349.0L248.6 359.2M248.8 339.9L236.7 350.1M248.8 339.9L245.9 341.5M248.8 339.9L248.6 359.2M248.8 339.9L257.7 350.1M257.9 331.4L245.9 341.5M257.9 331.4L254.5 333.5M257.9 331.4L257.7 350.1M257.9 331.4L266.2 341.5M266.4 323.5L254.5 333.5M266.4 323.5L262.5 326.0M266.4 323.5L266.2 341.5M266.4 323.5L274.2 333.5M274.4 316.0L262.5 326.0M274.4 316.0L270.2 318.9M274.4 316.0L274.2 333.5M274.4 316.0L281.7 326.0M281.9 309.0L270.2 318.9M281.9 309.0L277.3 312.2M281.9 309.0L281.7 326.0M281.9 309.0L288.7 318.9M288.9 302.3L277.3 312.2M288.9 302.3L284.1 305.9M288.9 302.3L288.7 318.9M288.9 302.3L295.4 312.2M295.6 296.1L284.1 305.9M295.6 296.1L290.6 299.9M295.6 296.1L295.4 312.2M295.6 296.1L301.7 305.9M301.9 290.2L290.6 299.9M301.9 290.2L296.6 294.2M301.9 290.2L301.7 305.9M301.9 290.2L307.6 299.9M307.9 284.6L296.6 294.2M307.9 284.6L302.4 288.8M307.9 284.6L307.6 299.9M307.9 284.6L313.3 294.2M313.5 279.4L302.4 288.8M313.5 279.4L307.9 283.7M313.5 279.4L313.3 294.2M313.5 279.4L318.6 288.8M318.9 274.3L307.9 283.7M318.9 274.3L313.1 278.9M318.9 274.3L318.6 288.8M318.9 274.3L323.7 283.7M324.0 269.6L313.1 278.9M324.0 269.6L318.1 274.2M324.0 269.6L323.7 283.7M324.0 269.6L328.6 278.9M328.8 265.0L318.1 274.2M328.8 265.0L322.9 269.8M328.8 265.0L328.6 278.9M328.8 265.0L333.2 274.2M333.4 260.7L322.9 269.8M333.4 260.7L327.4 265.6M333.4 260.7L333.2 274.2M333.4 260.7L337.6 269.8M337.8 256.6L327.4 265.6M337.8 256.6L337.6 269.8M205.2 406.4L205.2 402.9M218.3 393.0L205.2 402.9M218.3 393.0L217.3 390.7M230.4 380.7L217.3 390.7M230.4 380.7L228.5 379.5M241.6 369.4L228.5 379.5M241.6 369.4L238.9 369.0M252.0 358.8L238.9 369.0M252.0 358.8L248.6 359.2M261.6 349.0L248.6 359.2M261.6 349.0L257.7 350.1M270.6 339.9L257.7 350.1M270.6 339.9L266.2 341.5M278.9 331.4L266.2 341.5M278.9 331.4L274.2 333.5M286.8 323.5L274.2 333.5M286.8 323.5L281.7 326.0M294.1 316.0L281.7 326.0M294.1 316.0L288.7 318.9M301.0 309.0L288.7 318.9M301.0 309.0L295.4 312.2M307.5 302.3L295.4 312.2M307.5 302.3L301.7 305.9M313.7 296.1L301.7 305.9M313.7 296.1L307.6 299.9M319.5 290.2L307.6 299.9M319.5 290.2L313.3 294.2M325.0 284.6L313.3 294.2M325.0 284.6L318.6 288.8M330.2 279.4L318.6 288.8M330.2 279.4L323.7 283.7M335.1 274.3L323.7 283.7M335.1 274.3L328.6 278.9M339.8 269.6L328.6 278.9M339.8 269.6L333.2 274.2M344.3 265.0L333.2 274.2M344.3 265.0L337.6 269.8M348.5 260.7L337.6 269.8" stroke="#0000ff" stroke-width="2.15" fill="none"/><circle cx="204.3" cy="265.3" r="2.3" fill="#8890a0" opacity="0.85"/><circle cx="203.6" cy="265.6" r="0.9" fill="#d08040" opacity="0.8"/><path d="M204.3 268.4V252.5M204.3 268.4L217.3 261.4M204.3 268.4L191.300 261.400" stroke="#00f0ff" stroke-width="1.200" fill="none"/><path d="M204.300 250.800L202.700 255.300H205.900ZM219 260.500L214.300 260.800L215.900 263.600ZM189.600 260.500L194.300 260.800L192.700 263.600Z" fill="#00f0ff"/><g font-family="Liberation Sans,sans-serif" font-size="5.800" font-weight="bold" fill="#00e8ff"><text x="202.400" y="248.700">Z</text><text x="220.600" y="261">X</text><text x="185.200" y="261">Y</text></g></svg>

<svg class="abs" style="left:0;top:0" width="732" height="538" viewBox="0 0 732 538"><path d="M420.55 170.6V175.3" stroke="#505050" stroke-width="0.9"/><ellipse cx="420.55" cy="169" rx="2.0" ry="1.6" fill="#fff" stroke="#585858" stroke-width="1"/><path d="M415.9 175.30H420.6" stroke="#505050" stroke-width="0.9"/><ellipse cx="413.9" cy="175.30" rx="2.0" ry="1.6" fill="#fff" stroke="#585858" stroke-width="1"/><path d="M435.45 170.6V175.3" stroke="#505050" stroke-width="0.9"/><ellipse cx="435.45" cy="169" rx="2.0" ry="1.6" fill="#fff" stroke="#585858" stroke-width="1"/><path d="M415.9 190.19H420.6" stroke="#505050" stroke-width="0.9"/><ellipse cx="413.9" cy="190.19" rx="2.0" ry="1.6" fill="#fff" stroke="#585858" stroke-width="1"/><path d="M450.35 170.6V175.3" stroke="#505050" stroke-width="0.9"/><ellipse cx="450.35" cy="169" rx="2.0" ry="1.6" fill="#fff" stroke="#585858" stroke-width="1"/><path d="M415.9 205.08H420.6" stroke="#505050" stroke-width="0.9"/><ellipse cx="413.9" cy="205.08" rx="2.0" ry="1.6" fill="#fff" stroke="#585858" stroke-width="1"/><path d="M465.25 170.6V175.3" stroke="#505050" stroke-width="0.9"/><ellipse cx="465.25" cy="169" rx="2.0" ry="1.6" fill="#fff" stroke="#585858" stroke-width="1"/><path d="M415.9 219.97H420.6" stroke="#505050" stroke-width="0.9"/><ellipse cx="413.9" cy="219.97" rx="2.0" ry="1.6" fill="#fff" stroke="#585858" stroke-width="1"/><path d="M480.15 170.6V175.3" stroke="#505050" stroke-width="0.9"/><ellipse cx="480.15" cy="169" rx="2.0" ry="1.6" fill="#fff" stroke="#585858" stroke-width="1"/><path d="M415.9 234.86H420.6" stroke="#505050" stroke-width="0.9"/><ellipse cx="413.9" cy="234.86" rx="2.0" ry="1.6" fill="#fff" stroke="#585858" stroke-width="1"/><path d="M495.05 170.6V175.3" stroke="#505050" stroke-width="0.9"/><ellipse cx="495.05" cy="169" rx="2.0" ry="1.6" fill="#fff" stroke="#585858" stroke-width="1"/><path d="M415.9 249.75H420.6" stroke="#505050" stroke-width="0.9"/><ellipse cx="413.9" cy="249.75" rx="2.0" ry="1.6" fill="#fff" stroke="#585858" stroke-width="1"/><path d="M509.95 170.6V175.3" stroke="#505050" stroke-width="0.9"/><ellipse cx="509.95" cy="169" rx="2.0" ry="1.6" fill="#fff" stroke="#585858" stroke-width="1"/><path d="M415.9 264.63H420.6" stroke="#505050" stroke-width="0.9"/><ellipse cx="413.9" cy="264.63" rx="2.0" ry="1.6" fill="#fff" stroke="#585858" stroke-width="1"/><path d="M524.85 170.6V175.3" stroke="#505050" stroke-width="0.9"/><ellipse cx="524.85" cy="169" rx="2.0" ry="1.6" fill="#fff" stroke="#585858" stroke-width="1"/><path d="M415.9 279.52H420.6" stroke="#505050" stroke-width="0.9"/><ellipse cx="413.9" cy="279.52" rx="2.0" ry="1.6" fill="#fff" stroke="#585858" stroke-width="1"/><path d="M539.75 170.6V175.3" stroke="#505050" stroke-width="0.9"/><ellipse cx="539.75" cy="169" rx="2.0" ry="1.6" fill="#fff" stroke="#585858" stroke-width="1"/><path d="M415.9 294.41H420.6" stroke="#505050" stroke-width="0.9"/><ellipse cx="413.9" cy="294.41" rx="2.0" ry="1.6" fill="#fff" stroke="#585858" stroke-width="1"/><path d="M554.65 170.6V175.3" stroke="#505050" stroke-width="0.9"/><ellipse cx="554.65" cy="169" rx="2.0" ry="1.6" fill="#fff" stroke="#585858" stroke-width="1"/><path d="M415.9 309.30H420.6" stroke="#505050" stroke-width="0.9"/><ellipse cx="413.9" cy="309.30" rx="2.0" ry="1.6" fill="#fff" stroke="#585858" stroke-width="1"/><path d="M569.55 170.6V175.3" stroke="#505050" stroke-width="0.9"/><ellipse cx="569.55" cy="169" rx="2.0" ry="1.6" fill="#fff" stroke="#585858" stroke-width="1"/><path d="M415.9 324.19H420.6" stroke="#505050" stroke-width="0.9"/><ellipse cx="413.9" cy="324.19" rx="2.0" ry="1.6" fill="#fff" stroke="#585858" stroke-width="1"/><path d="M584.45 170.6V175.3" stroke="#505050" stroke-width="0.9"/><ellipse cx="584.45" cy="169" rx="2.0" ry="1.6" fill="#fff" stroke="#585858" stroke-width="1"/><path d="M415.9 339.08H420.6" stroke="#505050" stroke-width="0.9"/><ellipse cx="413.9" cy="339.08" rx="2.0" ry="1.6" fill="#fff" stroke="#585858" stroke-width="1"/><path d="M599.35 170.6V175.3" stroke="#505050" stroke-width="0.9"/><ellipse cx="599.35" cy="169" rx="2.0" ry="1.6" fill="#fff" stroke="#585858" stroke-width="1"/><path d="M415.9 353.97H420.6" stroke="#505050" stroke-width="0.9"/><ellipse cx="413.9" cy="353.97" rx="2.0" ry="1.6" fill="#fff" stroke="#585858" stroke-width="1"/><path d="M614.25 170.6V175.3" stroke="#505050" stroke-width="0.9"/><ellipse cx="614.25" cy="169" rx="2.0" ry="1.6" fill="#fff" stroke="#585858" stroke-width="1"/><path d="M415.9 368.86H420.6" stroke="#505050" stroke-width="0.9"/><ellipse cx="413.9" cy="368.86" rx="2.0" ry="1.6" fill="#fff" stroke="#585858" stroke-width="1"/><path d="M629.15 170.6V175.3" stroke="#505050" stroke-width="0.9"/><ellipse cx="629.15" cy="169" rx="2.0" ry="1.6" fill="#fff" stroke="#585858" stroke-width="1"/><path d="M415.9 383.75H420.6" stroke="#505050" stroke-width="0.9"/><ellipse cx="413.9" cy="383.75" rx="2.0" ry="1.6" fill="#fff" stroke="#585858" stroke-width="1"/><path d="M644.05 170.6V175.3" stroke="#505050" stroke-width="0.9"/><ellipse cx="644.05" cy="169" rx="2.0" ry="1.6" fill="#fff" stroke="#585858" stroke-width="1"/><path d="M415.9 398.63H420.6" stroke="#505050" stroke-width="0.9"/><ellipse cx="413.9" cy="398.63" rx="2.0" ry="1.6" fill="#fff" stroke="#585858" stroke-width="1"/><path d="M658.95 170.6V175.3" stroke="#505050" stroke-width="0.9"/><ellipse cx="658.95" cy="169" rx="2.0" ry="1.6" fill="#fff" stroke="#585858" stroke-width="1"/><path d="M415.9 413.52H420.6" stroke="#505050" stroke-width="0.9"/><ellipse cx="413.9" cy="413.52" rx="2.0" ry="1.6" fill="#fff" stroke="#585858" stroke-width="1"/><path d="M673.85 170.6V175.3" stroke="#505050" stroke-width="0.9"/><ellipse cx="673.85" cy="169" rx="2.0" ry="1.6" fill="#fff" stroke="#585858" stroke-width="1"/><path d="M415.9 428.41H420.6" stroke="#505050" stroke-width="0.9"/><ellipse cx="413.9" cy="428.41" rx="2.0" ry="1.6" fill="#fff" stroke="#585858" stroke-width="1"/><path d="M688.75 170.6V175.3" stroke="#505050" stroke-width="0.9"/><ellipse cx="688.75" cy="169" rx="2.0" ry="1.6" fill="#fff" stroke="#585858" stroke-width="1"/><path d="M415.9 443.30H420.6" stroke="#505050" stroke-width="0.9"/><ellipse cx="413.9" cy="443.30" rx="2.0" ry="1.6" fill="#fff" stroke="#585858" stroke-width="1"/><path d="M420.55 174.30V444.30M419.55 175.30H689.75M435.45 174.30V444.30M419.55 190.19H689.75M450.35 174.30V444.30M419.55 205.08H689.75M465.25 174.30V444.30M419.55 219.97H689.75M480.15 174.30V444.30M419.55 234.86H689.75M495.05 174.30V444.30M419.55 249.75H689.75M509.95 174.30V444.30M419.55 264.63H689.75M524.85 174.30V444.30M419.55 279.52H689.75M539.75 174.30V444.30M419.55 294.41H689.75M554.65 174.30V444.30M419.55 309.30H689.75M569.55 174.30V444.30M419.55 324.19H689.75M584.45 174.30V444.30M419.55 339.08H689.75M599.35 174.30V444.30M419.55 353.97H689.75M614.25 174.30V444.30M419.55 368.86H689.75M629.15 174.30V444.30M419.55 383.75H689.75M644.05 174.30V444.30M419.55 398.63H689.75M658.95 174.30V444.30M419.55 413.52H689.75M673.85 174.30V444.30M419.55 428.41H689.75M688.75 174.30V444.30M419.55 443.30H689.75" stroke="#0000ff" stroke-width="2.1" fill="none"/><path d="M413.05 175.30H427.35M420.55 167.80V182.10M413.05 264.63H427.35M420.55 257.13V271.43M413.05 353.97H427.35M420.55 346.47V360.77M413.05 443.30H427.35M420.55 435.80V450.10M502.45 175.30H516.75M509.95 167.80V182.10M502.45 264.63H516.75M509.95 257.13V271.43M502.45 353.97H516.75M509.95 346.47V360.77M502.45 443.30H516.75M509.95 435.80V450.10M591.85 175.30H606.15M599.35 167.80V182.10M591.85 264.63H606.15M599.35 257.13V271.43M591.85 353.97H606.15M599.35 346.47V360.77M591.85 443.30H606.15M599.35 435.80V450.10M681.25 175.30H695.55M688.75 167.80V182.10M681.25 264.63H695.55M688.75 257.13V271.43M681.25 353.97H695.55M688.75 346.47V360.77M681.25 443.30H695.55M688.75 435.80V450.10" stroke="#00f400" stroke-width="1.4" fill="none"/><path d="M554.5 291V309.3H573" stroke="#00f4ff" stroke-width="1.3" fill="none"/><path d="M554.5 289.3l-2.3 5.2h4.6zM575 309.3l-5.200 -2.300v4.600z" fill="#00f4ff"/><text x="552.500" y="286.500" font-size="5.500" fill="#38c8ff" font-family="Liberation Sans,sans-serif">Y</text><text x="577.500" y="311.300" font-size="5.500" fill="#38c8ff" font-family="Liberation Sans,sans-serif">X</text></svg>
<div id="status" class="abs"></div>
<div class="abs" style="left:20px;top:518px;font-size:11px">3-D View</div>
<div class="combo" style="left:544px;width:93px"><span style="position:absolute;left:2px;top:3.5px">GLOBAL</span></div>
<div class="combo" style="left:644px;width:79px"><span style="position:absolute;left:2px;top:3.5px">Kip, in, F</span></div>
<div class="abs" style="left:624px;top:515px;width:15px;height:16px;background:#ece9d8;border:1px solid #fbfaf6;border-right-color:#8c8878;border-bottom-color:#8c8878;box-sizing:border-box"></div>
<svg class="abs" style="left:628px;top:522px" width="8" height="4"><path d="M0 0H7L3.5 4Z" fill="#000"/></svg>
<div class="abs" style="left:710px;top:515px;width:15.5px;height:16px;background:#ece9d8;border:1px solid #fbfaf6;border-right-color:#8c8878;border-bottom-color:#8c8878;box-sizing:border-box"></div>
<svg class="abs" style="left:714px;top:522px" width="8" height="4"><path d="M0 0H7L3.5 4Z" fill="#000"/></svg>

<div class="abs" style="left:0;top:30px;width:4px;height:508px;background:linear-gradient(to right,#0831d9,#166aee 40%,#0855dd)"></div>
<div class="abs" style="left:728px;top:30px;width:4px;height:508px;background:linear-gradient(to right,#0855dd,#0046d5 50%,#001ea0)"></div>
<div class="abs" style="left:0;top:534px;width:732px;height:4px;background:linear-gradient(to bottom,#0855dd,#0046d5 50%,#001ea0)"></div>
<svg class="abs" style="left:0;top:28px" width="260" height="26" viewBox="0 28 260 26">
<g font-family="Liberation Sans,sans-serif" font-weight="bold" font-size="15" opacity="0.72" stroke-linejoin="round">
<text x="26" y="49.3" textLength="193" lengthAdjust="spacingAndGlyphs" stroke="#98a6c2" stroke-width="4.6" fill="#98a6c2">SOFTGOZAR.COM</text>
<text x="26" y="49.3" textLength="193" lengthAdjust="spacingAndGlyphs" stroke="#f6f6fa" stroke-width="1.5" fill="#f6f6fa">SOFT<tspan fill="#f6cf8c" stroke="#f6cf8c">G</tspan>OZAR.COM</text>
</g>
</svg>

<svg class="abs" style="left:0;top:50px" width="260" height="28" viewBox="0 50 260 28">
<g font-family="Liberation Serif,serif" font-weight="bold" font-size="12.2" opacity="0.55" style="paint-order:stroke" stroke-linejoin="round">
<text x="16.2" y="64.2" textLength="212" lengthAdjust="spacingAndGlyphs" stroke="#7585aa" stroke-width="1.9" fill="#f2f4f9">The First Iranian Software Encyclopedia</text>
</g>
</svg>

<div class="mi" style="left:22px">File</div>
<div class="mi" style="left:56px">Edit</div>
<div class="mi" style="left:93.5px">View</div>
<div class="mi" style="left:134px">Define</div>
<div class="mi" style="left:184px">Draw</div>
<div class="mi" style="left:228.5px">Select</div>
<div class="mi" style="left:276.5px">Assign</div>
<div class="mi" style="left:326.5px">Analyze</div>
<div class="mi" style="left:383.5px">Display</div>
<div class="mi" style="left:436.5px">Design</div>
<div class="mi" style="left:487.5px">Options</div>
<div class="mi" style="left:543.5px">Tools</div>
<div class="mi" style="left:587px">Help</div>
</body></html>
